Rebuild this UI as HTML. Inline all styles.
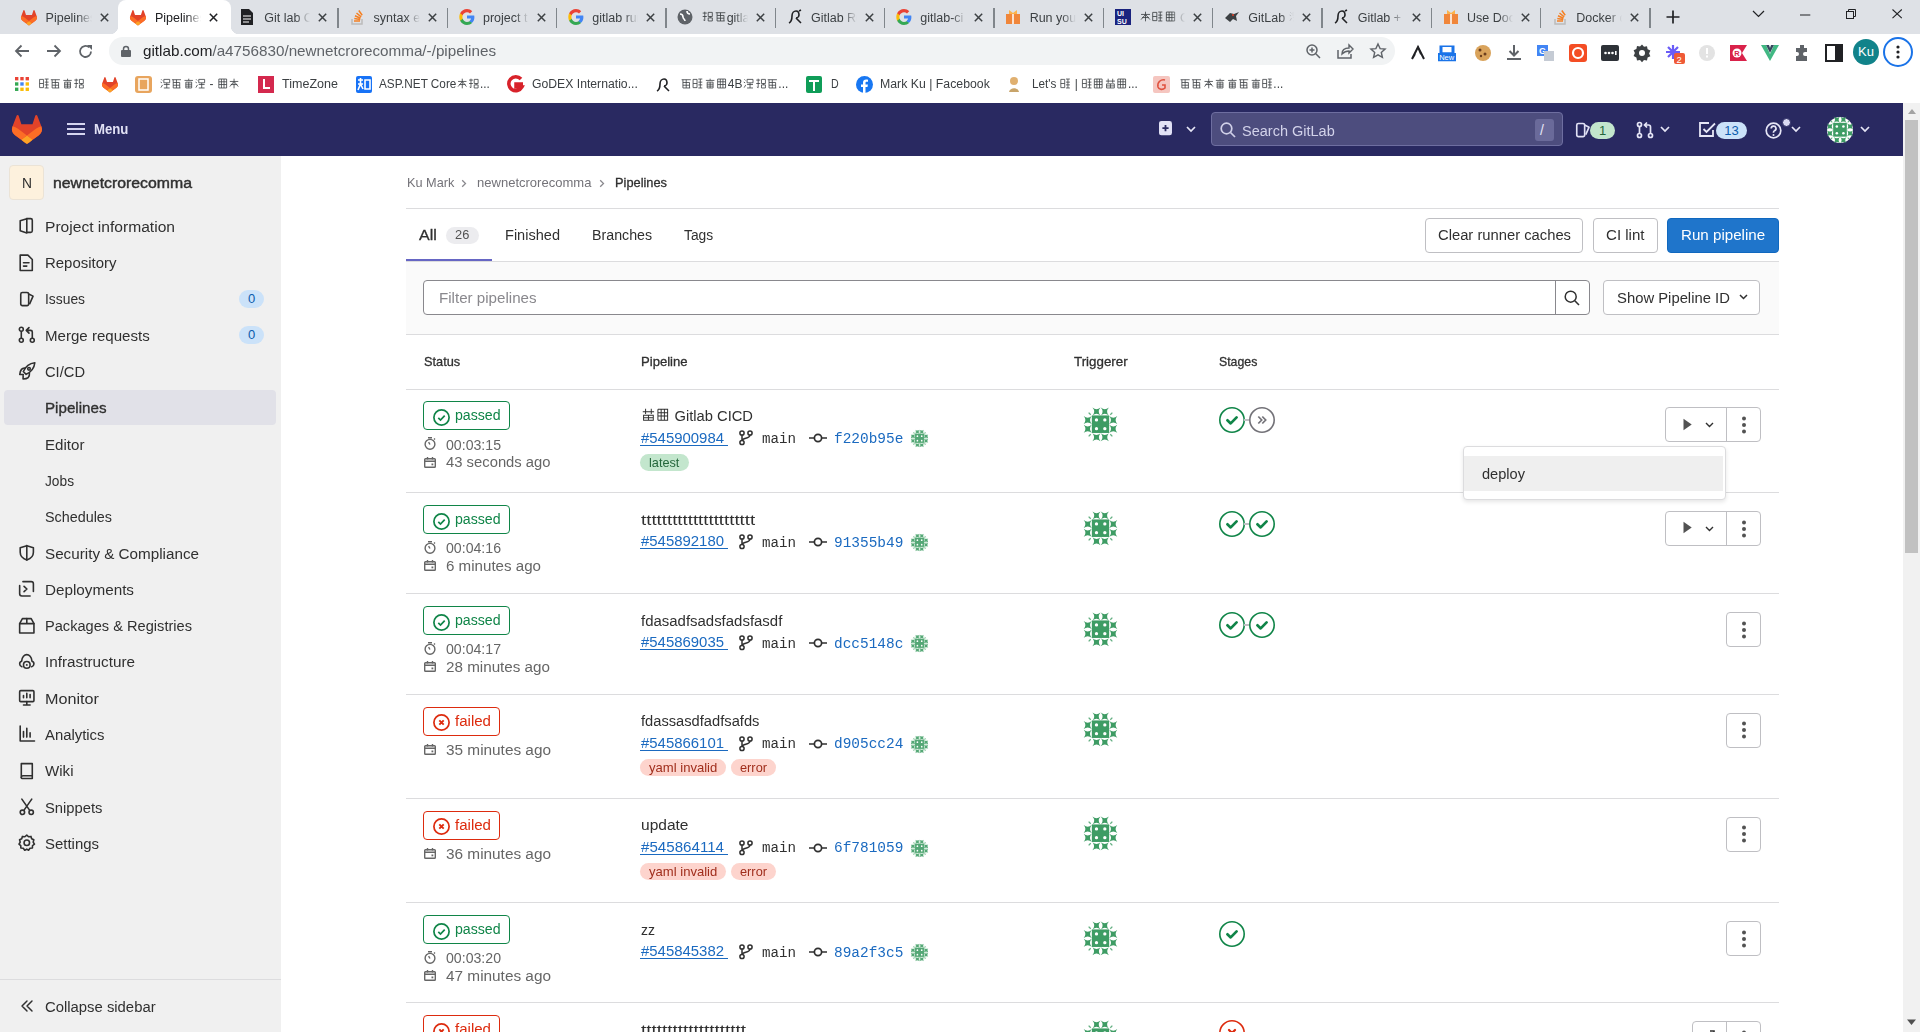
<!DOCTYPE html><html><head><meta charset="utf-8"><style>
*{box-sizing:border-box;margin:0;padding:0}
html,body{width:1920px;height:1032px;overflow:hidden;background:#fff;font-family:"Liberation Sans",sans-serif;color:#303030}
.a{position:absolute}
.t{position:absolute;white-space:nowrap}
svg{display:block;position:absolute;overflow:visible}
#tabs{position:absolute;left:0;top:0;width:1920px;height:34px;background:#dee1e6}
.tab{position:absolute;top:0;width:109.34px;height:34px;font-size:12.5px;color:#3c4043}
.tt{position:absolute;left:35.2px;top:9.7px;width:47px;height:18px;overflow:hidden;white-space:nowrap;line-height:16px;-webkit-mask-image:linear-gradient(90deg,#000 68%,transparent 98%)}
.sep{position:absolute;left:108.3px;top:7.7px;width:1.2px;height:20.3px;background:#80868b}
#toolbar{position:absolute;left:0;top:34px;width:1920px;height:34px;background:#fff}
#bm{position:absolute;left:0;top:68px;width:1920px;height:35px;background:#fff}
.bmi{position:absolute;top:8px;height:18px;font-size:12.5px;color:#3c4043;line-height:18px;white-space:nowrap}
#nav{position:absolute;left:0;top:103px;width:1903px;height:53px;background:#292961}
#side{position:absolute;left:0;top:156px;width:281px;height:876px;background:#f0f0f0}
.si{position:absolute;left:44px;font-size:15.4px;color:#303030;line-height:20px;white-space:nowrap}
.cnt{position:absolute;left:239px;width:25px;height:18px;border-radius:9px;background:#cbe2f9;color:#0b5cad;font-size:13px;text-align:center;line-height:18px}
#scroll{position:absolute;left:1903px;top:103px;width:17px;height:929px;background:#f1f1f1}
.hr{position:absolute;left:406px;width:1373px;height:1px;background:#dcdcde}
.btn{position:absolute;height:35px;border:1px solid #bfbfc3;border-radius:4px;background:#fff;font-size:15.4px;color:#303030;line-height:33px;text-align:center;white-space:nowrap}
.th{position:absolute;font-size:14.3px;font-weight:bold;color:#303030;line-height:20px;white-space:nowrap}
.badge{position:absolute;left:423px;height:29px;border:1px solid;border-radius:4px;font-size:15.4px;line-height:27px;white-space:nowrap}
.pass{border-color:#108548;color:#108548}
.fail{border-color:#dd2b0e;color:#dd2b0e}
.meta{position:absolute;left:445px;font-size:15.4px;color:#666;line-height:20px;white-space:nowrap}
.ptitle{position:absolute;left:640px;font-size:15.4px;color:#303030;line-height:20px;white-space:nowrap}
.plink{position:absolute;left:640px;font-size:15.4px;color:#1f75cb;line-height:20px;white-space:nowrap;text-decoration:underline}
.mono{position:absolute;font-family:"Liberation Mono",monospace;font-size:14.5px;line-height:20px;white-space:nowrap}
.tag{position:absolute;height:17px;border-radius:9px;font-size:13.2px;line-height:17px;text-align:center;white-space:nowrap}
.latest{background:#c3e6cd;color:#24663b}
.red{background:#fdd4cd;color:#ae1800}
.grp{position:absolute;height:35px;border:1px solid #bfbfc3;border-radius:4px;background:#fff}
</style></head><body>
<div id="tabs">
<div class="tab" style="left:10.4px">
<svg style="left:10.5px;top:9.5px;width:16px;height:15.36px" viewBox="0 0 25 24" ><path d="m24.507 9.5-.034-.09L21.082.562a.896.896 0 0 0-1.694.091l-2.29 7.01H7.825L5.535.653a.898.898 0 0 0-1.694-.09L.451 9.411.416 9.5a6.297 6.297 0 0 0 2.09 7.278l.012.01.03.022 5.16 3.867 2.56 1.935 1.554 1.176a1.051 1.051 0 0 0 1.268 0l1.555-1.176 2.56-1.935 5.197-3.89.014-.01A6.297 6.297 0 0 0 24.507 9.5Z" fill="#E24329"/><path d="m24.507 9.5-.034-.09a11.44 11.44 0 0 0-4.56 2.051l-7.447 5.632 4.742 3.584 5.197-3.89.014-.01A6.297 6.297 0 0 0 24.507 9.5Z" fill="#FC6D26"/><path d="m7.707 20.677 2.56 1.935 1.555 1.176a1.051 1.051 0 0 0 1.268 0l1.555-1.176 2.56-1.935-4.743-3.584-4.755 3.584Z" fill="#FCA326"/><path d="M5.01 11.461a11.43 11.43 0 0 0-4.56-2.05L.416 9.5a6.297 6.297 0 0 0 2.09 7.278l.012.01.03.022 5.16 3.867 4.745-3.584-7.444-5.632Z" fill="#FC6D26"/></svg>
<div class="tt" style="color:#3c4043">Pipelines</div>
<svg style="left:89.3px;top:12.5px;width:9px;height:9px" viewBox="0 0 9 9" ><path d="M.8 .8L8.2 8.2M8.2 .8L.8 8.2" stroke="#3c4043" stroke-width="1.5"/></svg>
</div>
<div class="a" style="left:118.24px;top:0;width:112.3px;height:34px;background:#fff;border-radius:8px 8px 0 0"></div>
<div class="a" style="left:110.24px;top:26px;width:8px;height:8px;background:radial-gradient(circle at 0 0,transparent 8px,#fff 8.5px)"></div>
<div class="a" style="left:230.54px;top:26px;width:8px;height:8px;background:radial-gradient(circle at 100% 0,transparent 8px,#fff 8.5px)"></div>
<div class="tab" style="left:119.74px">
<svg style="left:10.5px;top:9.5px;width:16px;height:15.36px" viewBox="0 0 25 24" ><path d="m24.507 9.5-.034-.09L21.082.562a.896.896 0 0 0-1.694.091l-2.29 7.01H7.825L5.535.653a.898.898 0 0 0-1.694-.09L.451 9.411.416 9.5a6.297 6.297 0 0 0 2.09 7.278l.012.01.03.022 5.16 3.867 2.56 1.935 1.554 1.176a1.051 1.051 0 0 0 1.268 0l1.555-1.176 2.56-1.935 5.197-3.89.014-.01A6.297 6.297 0 0 0 24.507 9.5Z" fill="#E24329"/><path d="m24.507 9.5-.034-.09a11.44 11.44 0 0 0-4.56 2.051l-7.447 5.632 4.742 3.584 5.197-3.89.014-.01A6.297 6.297 0 0 0 24.507 9.5Z" fill="#FC6D26"/><path d="m7.707 20.677 2.56 1.935 1.555 1.176a1.051 1.051 0 0 0 1.268 0l1.555-1.176 2.56-1.935-4.743-3.584-4.755 3.584Z" fill="#FCA326"/><path d="M5.01 11.461a11.43 11.43 0 0 0-4.56-2.05L.416 9.5a6.297 6.297 0 0 0 2.09 7.278l.012.01.03.022 5.16 3.867 4.745-3.584-7.444-5.632Z" fill="#FC6D26"/></svg>
<div class="tt" style="color:#202124">Pipelines</div>
<svg style="left:89.3px;top:12.5px;width:9px;height:9px" viewBox="0 0 9 9" ><path d="M.8 .8L8.2 8.2M8.2 .8L.8 8.2" stroke="#202124" stroke-width="1.5"/></svg>
</div>
<div class="tab" style="left:229.08px">
<svg style="left:11px;top:9px;width:14px;height:16px" viewBox="0 0 14 16" ><path d="M1 0h8l4 4v12H1z" fill="#202124"/><path d="M3 7h8M3 10h8M3 13h6" stroke="#fff" stroke-width="1.2"/></svg>
<div class="tt" style="color:#3c4043">Git lab CI</div>
<svg style="left:89.3px;top:12.5px;width:9px;height:9px" viewBox="0 0 9 9" ><path d="M.8 .8L8.2 8.2M8.2 .8L.8 8.2" stroke="#3c4043" stroke-width="1.5"/></svg>
<div class="sep"></div>
</div>
<div class="tab" style="left:338.42px">
<svg style="left:11px;top:9px;width:16px;height:16px" viewBox="0 0 16 16" ><path d="M3 10v5h10v-5" fill="none" stroke="#bcbbbb" stroke-width="1.5"/><path d="M5 12h6M5.3 9.5l6 1M6 6.8l5.5 2.5M7.5 4l4.7 3.8M9.8 1.5l3.4 4.8" stroke="#f48024" stroke-width="1.5"/></svg>
<div class="tt" style="color:#3c4043">syntax err</div>
<svg style="left:89.3px;top:12.5px;width:9px;height:9px" viewBox="0 0 9 9" ><path d="M.8 .8L8.2 8.2M8.2 .8L.8 8.2" stroke="#3c4043" stroke-width="1.5"/></svg>
<div class="sep"></div>
</div>
<div class="tab" style="left:447.76px">
<svg style="left:11px;top:9px;width:16px;height:16px" viewBox="0 0 16 16" ><path fill="#4285F4" d="M15.4 8.2c0-.6-.1-1.1-.2-1.6H8v3h4.1c-.2 1-.7 1.8-1.5 2.3v1.9h2.5c1.4-1.3 2.3-3.3 2.3-5.6z"/><path fill="#34A853" d="M8 16c2.1 0 3.8-.7 5.1-1.9l-2.5-1.9c-.7.5-1.6.8-2.6.8-2 0-3.7-1.4-4.3-3.2H1.1v2C2.4 14.3 5 16 8 16z"/><path fill="#FBBC05" d="M3.7 9.8c-.2-.5-.3-1.1-.3-1.8s.1-1.2.3-1.8v-2H1.1C.6 5.3.3 6.6.3 8s.3 2.7.8 3.8z"/><path fill="#EA4335" d="M8 3.2c1.1 0 2.2.4 3 1.2l2.2-2.2C11.8.8 10.1 0 8 0 5 0 2.4 1.7 1.1 4.2l2.6 2C4.3 4.6 6 3.2 8 3.2z"/></svg>
<div class="tt" style="color:#3c4043">project t</div>
<svg style="left:89.3px;top:12.5px;width:9px;height:9px" viewBox="0 0 9 9" ><path d="M.8 .8L8.2 8.2M8.2 .8L.8 8.2" stroke="#3c4043" stroke-width="1.5"/></svg>
<div class="sep"></div>
</div>
<div class="tab" style="left:557.1px">
<svg style="left:11px;top:9px;width:16px;height:16px" viewBox="0 0 16 16" ><path fill="#4285F4" d="M15.4 8.2c0-.6-.1-1.1-.2-1.6H8v3h4.1c-.2 1-.7 1.8-1.5 2.3v1.9h2.5c1.4-1.3 2.3-3.3 2.3-5.6z"/><path fill="#34A853" d="M8 16c2.1 0 3.8-.7 5.1-1.9l-2.5-1.9c-.7.5-1.6.8-2.6.8-2 0-3.7-1.4-4.3-3.2H1.1v2C2.4 14.3 5 16 8 16z"/><path fill="#FBBC05" d="M3.7 9.8c-.2-.5-.3-1.1-.3-1.8s.1-1.2.3-1.8v-2H1.1C.6 5.3.3 6.6.3 8s.3 2.7.8 3.8z"/><path fill="#EA4335" d="M8 3.2c1.1 0 2.2.4 3 1.2l2.2-2.2C11.8.8 10.1 0 8 0 5 0 2.4 1.7 1.1 4.2l2.6 2C4.3 4.6 6 3.2 8 3.2z"/></svg>
<div class="tt" style="color:#3c4043">gitlab run</div>
<svg style="left:89.3px;top:12.5px;width:9px;height:9px" viewBox="0 0 9 9" ><path d="M.8 .8L8.2 8.2M8.2 .8L.8 8.2" stroke="#3c4043" stroke-width="1.5"/></svg>
<div class="sep"></div>
</div>
<div class="tab" style="left:666.44px">
<svg style="left:11px;top:9px;width:16px;height:16px" viewBox="0 0 16 16" ><circle cx="8" cy="8" r="7.5" fill="#5f6368"/><path d="M3 5c2 0 3 1 3 3s2 2 2 4M10 2c0 2 1 3 3 3" stroke="#fff" stroke-width="1.6" fill="none"/></svg>
<div class="tt" style="color:#3c4043"><span style="display:inline-block;width:1em;height:1em;vertical-align:-0.13em;position:relative"><svg viewBox="0 0 16 16" style="position:absolute;left:0.06em;top:0.04em;width:.88em;height:.88em;overflow:visible"><path d="M1 3h6M4 1v13l-2-1M1 8h6M9 2h6v6H9zM9 10h6v4.5H9zM12 8v2" stroke="currentColor" stroke-width="1.2" fill="none" opacity="1.0"/></svg></span><span style="display:inline-block;width:1em;height:1em;vertical-align:-0.13em;position:relative"><svg viewBox="0 0 16 16" style="position:absolute;left:0.06em;top:0.04em;width:.88em;height:.88em;overflow:visible"><path d="M1 2.5h14M3 2.5v12M3 6.5h10M3 10.5h10M3 14.5h11M8 2.5v12M13 6.5v8" stroke="currentColor" stroke-width="1.2" fill="none" opacity="1.0"/></svg></span>gitlab</div>
<svg style="left:89.3px;top:12.5px;width:9px;height:9px" viewBox="0 0 9 9" ><path d="M.8 .8L8.2 8.2M8.2 .8L.8 8.2" stroke="#3c4043" stroke-width="1.5"/></svg>
<div class="sep"></div>
</div>
<div class="tab" style="left:775.78px">
<svg style="left:11px;top:9px;width:16px;height:16px" viewBox="0 0 16 16" ><path d="M2 14c2-1 3-4 3-7s2-5 4-5 3 2 3 4-2 3-3 3M9 9l5 5M12 2l2-1" stroke="#202124" stroke-width="1.6" fill="none"/></svg>
<div class="tt" style="color:#3c4043">Gitlab Ru</div>
<svg style="left:89.3px;top:12.5px;width:9px;height:9px" viewBox="0 0 9 9" ><path d="M.8 .8L8.2 8.2M8.2 .8L.8 8.2" stroke="#3c4043" stroke-width="1.5"/></svg>
<div class="sep"></div>
</div>
<div class="tab" style="left:885.12px">
<svg style="left:11px;top:9px;width:16px;height:16px" viewBox="0 0 16 16" ><path fill="#4285F4" d="M15.4 8.2c0-.6-.1-1.1-.2-1.6H8v3h4.1c-.2 1-.7 1.8-1.5 2.3v1.9h2.5c1.4-1.3 2.3-3.3 2.3-5.6z"/><path fill="#34A853" d="M8 16c2.1 0 3.8-.7 5.1-1.9l-2.5-1.9c-.7.5-1.6.8-2.6.8-2 0-3.7-1.4-4.3-3.2H1.1v2C2.4 14.3 5 16 8 16z"/><path fill="#FBBC05" d="M3.7 9.8c-.2-.5-.3-1.1-.3-1.8s.1-1.2.3-1.8v-2H1.1C.6 5.3.3 6.6.3 8s.3 2.7.8 3.8z"/><path fill="#EA4335" d="M8 3.2c1.1 0 2.2.4 3 1.2l2.2-2.2C11.8.8 10.1 0 8 0 5 0 2.4 1.7 1.1 4.2l2.6 2C4.3 4.6 6 3.2 8 3.2z"/></svg>
<div class="tt" style="color:#3c4043">gitlab-ci</div>
<svg style="left:89.3px;top:12.5px;width:9px;height:9px" viewBox="0 0 9 9" ><path d="M.8 .8L8.2 8.2M8.2 .8L.8 8.2" stroke="#3c4043" stroke-width="1.5"/></svg>
<div class="sep"></div>
</div>
<div class="tab" style="left:994.46px">
<svg style="left:11px;top:9px;width:16px;height:16px" viewBox="0 0 16 16" ><path d="M1 5h14v10H1z" fill="#f0863a"/><path d="M4 1l4 3 4-3v4H4z" fill="#fcb34b"/><path d="M8 5v10" stroke="#fff" stroke-width="1.5"/></svg>
<div class="tt" style="color:#3c4043">Run your</div>
<svg style="left:89.3px;top:12.5px;width:9px;height:9px" viewBox="0 0 9 9" ><path d="M.8 .8L8.2 8.2M8.2 .8L.8 8.2" stroke="#3c4043" stroke-width="1.5"/></svg>
<div class="sep"></div>
</div>
<div class="tab" style="left:1103.8px">
<svg style="left:11px;top:9px;width:16px;height:16px" viewBox="0 0 16 16" ><rect width="16" height="16" fill="#1a237e"/><text x="2" y="7" font-size="7" fill="#fff" font-family="Liberation Sans" font-weight="bold">UI</text><text x="2" y="14.5" font-size="7" fill="#fff" font-family="Liberation Sans" font-weight="bold">SU</text></svg>
<div class="tt" style="color:#3c4043"><span style="display:inline-block;width:1em;height:1em;vertical-align:-0.13em;position:relative"><svg viewBox="0 0 16 16" style="position:absolute;left:0.06em;top:0.04em;width:.88em;height:.88em;overflow:visible"><path d="M1.5 5h13M8 1v14M7.5 5.5l-6 7M8.5 5.5l6 7M3 9.5h10" stroke="currentColor" stroke-width="1.2" fill="none" opacity="1.0"/></svg></span><span style="display:inline-block;width:1em;height:1em;vertical-align:-0.13em;position:relative"><svg viewBox="0 0 16 16" style="position:absolute;left:0.06em;top:0.04em;width:.88em;height:.88em;overflow:visible"><path d="M1 2v12M1 2h6v12H1M1 8h6M9 1.5h6M12 1.5v13M9 6h6M9 10h6M9 14.5h6" stroke="currentColor" stroke-width="1.2" fill="none" opacity="1.0"/></svg></span><span style="display:inline-block;width:1em;height:1em;vertical-align:-0.13em;position:relative"><svg viewBox="0 0 16 16" style="position:absolute;left:0.06em;top:0.04em;width:.88em;height:.88em;overflow:visible"><path d="M2 1.5v13M2 1.5h12v13H2M2 5.5h12M2 9.5h12M6 1.5v13M10 1.5v13" stroke="currentColor" stroke-width="1.2" fill="none" opacity="1.0"/></svg></span> G</div>
<svg style="left:89.3px;top:12.5px;width:9px;height:9px" viewBox="0 0 9 9" ><path d="M.8 .8L8.2 8.2M8.2 .8L.8 8.2" stroke="#3c4043" stroke-width="1.5"/></svg>
<div class="sep"></div>
</div>
<div class="tab" style="left:1213.14px">
<svg style="left:11px;top:9px;width:16px;height:16px" viewBox="0 0 16 16" ><path d="M1 9l5-5 4 1 5-2-3 4 1 5-4-2-3 3z" fill="#3c4043"/><circle cx="9" cy="6" r="1" fill="#e24329"/></svg>
<div class="tt" style="color:#3c4043">GitLab <span style="display:inline-block;width:1em;height:1em;vertical-align:-0.13em;position:relative"><svg viewBox="0 0 16 16" style="position:absolute;left:0.06em;top:0.04em;width:.88em;height:.88em;overflow:visible"><path d="M2 2l1.5 1.5M1 6l2 1M1.5 14l2.5-4M6 2h9v5H6zM6 9.5h9M10.5 7v7.5M6 14.5h9" stroke="currentColor" stroke-width="1.2" fill="none" opacity="1.0"/></svg></span></div>
<svg style="left:89.3px;top:12.5px;width:9px;height:9px" viewBox="0 0 9 9" ><path d="M.8 .8L8.2 8.2M8.2 .8L.8 8.2" stroke="#3c4043" stroke-width="1.5"/></svg>
<div class="sep"></div>
</div>
<div class="tab" style="left:1322.48px">
<svg style="left:11px;top:9px;width:16px;height:16px" viewBox="0 0 16 16" ><path d="M2 14c2-1 3-4 3-7s2-5 4-5 3 2 3 4-2 3-3 3M9 9l5 5M12 2l2-1" stroke="#202124" stroke-width="1.6" fill="none"/></svg>
<div class="tt" style="color:#3c4043">Gitlab + D</div>
<svg style="left:89.3px;top:12.5px;width:9px;height:9px" viewBox="0 0 9 9" ><path d="M.8 .8L8.2 8.2M8.2 .8L.8 8.2" stroke="#3c4043" stroke-width="1.5"/></svg>
<div class="sep"></div>
</div>
<div class="tab" style="left:1431.82px">
<svg style="left:11px;top:9px;width:16px;height:16px" viewBox="0 0 16 16" ><path d="M1 5h14v10H1z" fill="#f0863a"/><path d="M4 1l4 3 4-3v4H4z" fill="#fcb34b"/><path d="M8 5v10" stroke="#fff" stroke-width="1.5"/></svg>
<div class="tt" style="color:#3c4043">Use Doc</div>
<svg style="left:89.3px;top:12.5px;width:9px;height:9px" viewBox="0 0 9 9" ><path d="M.8 .8L8.2 8.2M8.2 .8L.8 8.2" stroke="#3c4043" stroke-width="1.5"/></svg>
<div class="sep"></div>
</div>
<div class="tab" style="left:1541.16px">
<svg style="left:11px;top:9px;width:16px;height:16px" viewBox="0 0 16 16" ><path d="M3 10v5h10v-5" fill="none" stroke="#bcbbbb" stroke-width="1.5"/><path d="M5 12h6M5.3 9.5l6 1M6 6.8l5.5 2.5M7.5 4l4.7 3.8M9.8 1.5l3.4 4.8" stroke="#f48024" stroke-width="1.5"/></svg>
<div class="tt" style="color:#3c4043">Docker c</div>
<svg style="left:89.3px;top:12.5px;width:9px;height:9px" viewBox="0 0 9 9" ><path d="M.8 .8L8.2 8.2M8.2 .8L.8 8.2" stroke="#3c4043" stroke-width="1.5"/></svg>
<div class="sep"></div>
</div>
<svg style="left:1665.5px;top:10px;width:14px;height:14px" viewBox="0 0 14 14" ><path d="M7 .5v13M.5 7h13" stroke="#202124" stroke-width="1.7"/></svg>
<svg style="left:1752px;top:10px;width:13px;height:8px" viewBox="0 0 13 8" ><path d="M1 1l5.5 5.5L12 1" stroke="#202124" stroke-width="1.2" fill="none"/></svg>
<svg style="left:1799.7px;top:13.5px;width:10.3px;height:2px" viewBox="0 0 10.3 2" ><path d="M0 1h10.3" stroke="#202124" stroke-width="1"/></svg>
<svg style="left:1846px;top:9px;width:10px;height:10px" viewBox="0 0 10 10" ><path d="M2.5 2.5V.5h7v7h-2" stroke="#202124" stroke-width="1" fill="none"/><rect x=".5" y="2.5" width="7" height="7" stroke="#202124" stroke-width="1" fill="none"/></svg>
<svg style="left:1892px;top:9.2px;width:10.3px;height:9.7px" viewBox="0 0 10.3 9.7" ><path d="M.5 .5l9.3 8.7M9.8 .5L.5 9.2" stroke="#202124" stroke-width="1.05"/></svg>
</div>
<div id="toolbar">
<svg style="left:14px;top:10px;width:16px;height:14px" viewBox="0 0 16 14" ><path d="M15 7H2M7.5 1.5L2 7l5.5 5.5" stroke="#5f6368" stroke-width="1.8" fill="none"/></svg>
<svg style="left:46px;top:10px;width:16px;height:14px" viewBox="0 0 16 14" ><path d="M1 7h13M8.5 1.5L14 7l-5.5 5.5" stroke="#5f6368" stroke-width="1.8" fill="none"/></svg>
<svg style="left:78px;top:10px;width:15px;height:15px" viewBox="0 0 15 15" ><path d="M13 7.5A5.5 5.5 0 1 1 11.2 3.4" stroke="#5f6368" stroke-width="1.8" fill="none"/><path d="M9 1h5v5z" fill="#5f6368"/></svg>
<div class="a" style="left:109px;top:3px;width:1286px;height:28px;border-radius:14px;background:#f1f3f4"></div>
<svg style="left:121px;top:11px;width:10px;height:12px" viewBox="0 0 10 12" ><rect x="0" y="5" width="10" height="7" rx="1" fill="#5f6368"/><path d="M2.5 5.5V4a2.5 2.5 0 0 1 5 0v1.5" stroke="#5f6368" stroke-width="1.5" fill="none"/></svg>
<div class="t" style="left:142.7px;top:8.20px;font-size:15px;line-height:18px;color:#202124;font-weight:400;font-family:'Liberation Sans',sans-serif;transform:scaleX(1.0152);transform-origin:0 0;">gitlab.com<span style="color:#5f6368">/a4756830/newnetcrorecomma/-/pipelines</span></div>
<svg style="left:1306px;top:10px;width:15px;height:15px" viewBox="0 0 15 15" ><circle cx="6" cy="6" r="5" stroke="#5f6368" stroke-width="1.5" fill="none"/><path d="M9.8 9.8L14 14M3.5 6h5M6 3.5v5" stroke="#5f6368" stroke-width="1.5"/></svg>
<svg style="left:1337px;top:10px;width:17px;height:15px" viewBox="0 0 17 15" ><path d="M1 6v8h13v-4" stroke="#5f6368" stroke-width="1.5" fill="none"/><path d="M5 10c0-4 3-6 7-6V1l4 4-4 4V7c-3 0-5 1-7 3z" stroke="#5f6368" stroke-width="1.4" fill="none"/></svg>
<svg style="left:1370px;top:9px;width:16px;height:16px" viewBox="0 0 16 16" ><path d="M8 1l2.1 4.6 5 .5-3.8 3.4 1.1 4.9L8 11.8l-4.4 2.6 1.1-4.9L.9 6.1l5-.5z" stroke="#5f6368" stroke-width="1.4" fill="none"/></svg>
<svg style="left:1409px;top:9.5px;width:18px;height:18px" viewBox="0 0 18 18" ><path d="M3 15L9 3l6 12M6 10l-3 5M9 3l3 7" stroke="#202124" stroke-width="2" fill="none"/></svg>
<svg style="left:1438px;top:9.5px;width:18px;height:18px" viewBox="0 0 24 22" ><rect x="2" y="1" width="20" height="12" fill="#1a73e8"/><rect x="6" y="3" width="12" height="7" fill="#fff"/><rect x="0" y="11" width="24" height="11" fill="#1a73e8"/><text x="1.5" y="20.5" font-size="10" fill="#fff" font-family="Liberation Sans">New</text></svg>
<svg style="left:1474px;top:9.5px;width:18px;height:18px" viewBox="0 0 18 18" ><circle cx="9" cy="9" r="8" fill="#d9a35b"/><circle cx="6" cy="6" r="1.5" fill="#6b3e1e"/><circle cx="11" cy="10" r="1.5" fill="#6b3e1e"/><circle cx="7" cy="12" r="1.2" fill="#6b3e1e"/></svg>
<svg style="left:1505px;top:9.5px;width:18px;height:18px" viewBox="0 0 18 18" ><path d="M9 1v10M4.5 7L9 11.5 13.5 7M2 15h14" stroke="#5f6368" stroke-width="2" fill="none"/></svg>
<svg style="left:1536px;top:9.5px;width:18px;height:18px" viewBox="0 0 18 18" ><rect x="1" y="1" width="11" height="11" fill="#4285f4"/><text x="3" y="10" font-size="9" fill="#fff" font-family="Liberation Sans" font-weight="bold">G</text><rect x="8" y="7" width="10" height="10" fill="#c5cbd4"/></svg>
<svg style="left:1569px;top:9.5px;width:18px;height:18px" viewBox="0 0 18 18" ><rect x="0" y="0" width="18" height="18" rx="3" fill="#f44d24"/><circle cx="9" cy="9" r="5" stroke="#fff" stroke-width="2.2" fill="none"/></svg>
<svg style="left:1601px;top:9.5px;width:18px;height:18px" viewBox="0 0 18 18" ><rect x="0" y="1" width="18" height="16" rx="2" fill="#2d3137"/><circle cx="4.5" cy="9" r="1.3" fill="#fff"/><circle cx="8" cy="9" r="1.3" fill="#fff"/><circle cx="11.5" cy="9" r="1.3" fill="#fff"/><rect x="14" y="7" width="1.6" height="4" fill="#fff"/></svg>
<svg style="left:1633px;top:9.5px;width:18px;height:18px" viewBox="0 0 18 18" ><path d="M9 0.5l2 2.3 3-.5.6 3 2.8 1.3-1.3 2.8 1.3 2.8-2.8 1.3-.6 3-3-.5-2 2.3-2-2.3-3 .5-.6-3L.6 11.9 1.9 9 .6 6.2l2.8-1.3.6-3 3 .5z" fill="#3c4043"/><circle cx="9" cy="9" r="3" fill="#fff"/></svg>
<svg style="left:1665px;top:9.5px;width:18px;height:18px" viewBox="0 0 18 18" ><path d="M8 1v14M1 8h14M3 3l10 10M13 3L3 13" stroke="#6a5cf7" stroke-width="2.2"/><rect x="9" y="9" width="11" height="11" rx="2" fill="#ef5a36"/><text x="11.5" y="18.5" font-size="9.5" fill="#fff" font-family="Liberation Sans">2</text></svg>
<svg style="left:1698px;top:9.5px;width:18px;height:18px" viewBox="0 0 18 18" ><circle cx="9" cy="9" r="8" fill="#e3e3e3"/><rect x="8" y="4" width="2" height="6" fill="#fff"/><rect x="8" y="11.5" width="2" height="2" fill="#fff"/></svg>
<svg style="left:1729px;top:9.5px;width:18px;height:18px" viewBox="0 0 18 18" ><path d="M1 1h17l-5 8 5 8H1z" fill="#d9224a"/><circle cx="8" cy="9" r="4.5" fill="#fff"/><text x="5.3" y="12" font-size="7.5" fill="#d9224a" font-weight="bold" font-family="Liberation Sans">R</text></svg>
<svg style="left:1761px;top:9.5px;width:18px;height:18px" viewBox="0 0 18 18" ><path d="M0 1h5l4 9 4-9h5L9 17z" fill="#41b883"/><path d="M5 1h3l1 3 1-3h3l-4 8z" fill="#35495e"/></svg>
<svg style="left:1793px;top:9.5px;width:18px;height:18px" viewBox="0 0 18 18" ><path d="M7 1h4v3h3v4h-2a2 2 0 0 0 0 4h2v5H3v-5h1a2 2 0 0 0 0-4H3V4h4z" fill="#5f6368"/></svg>
<svg style="left:1825px;top:9.5px;width:18px;height:18px" viewBox="0 0 18 18" ><rect x="1" y="1" width="16" height="16" stroke="#202124" stroke-width="2" fill="none"/><rect x="10" y="1" width="7" height="16" fill="#202124"/></svg>
<div class="a" style="left:1853px;top:5.3px;width:26px;height:26px;border-radius:13px;background:#11838a;color:#fff;font-size:13px;line-height:26px;text-align:center">Ku</div>
<div class="a" style="left:1883px;top:3.3px;width:30px;height:30px;border-radius:15px;border:2px solid #1a73e8"></div>
<svg style="left:1896px;top:11.3px;width:4px;height:14px" viewBox="0 0 4 14" ><circle cx="2" cy="2" r="1.6" fill="#202124"/><circle cx="2" cy="7" r="1.6" fill="#202124"/><circle cx="2" cy="12" r="1.6" fill="#202124"/></svg>
</div>
<div id="bm">
<svg style="left:15px;top:9px;width:13px;height:13px" viewBox="0 0 13.5 13.5" ><rect x="0.0" y="0.0" width="3.5" height="3.5" fill="#ea4335"/><rect x="5.5" y="0.0" width="3.5" height="3.5" fill="#ea4335"/><rect x="11.0" y="0.0" width="3.5" height="3.5" fill="#ea4335"/><rect x="0.0" y="5.5" width="3.5" height="3.5" fill="#34a853"/><rect x="5.5" y="5.5" width="3.5" height="3.5" fill="#4285f4"/><rect x="11.0" y="5.5" width="3.5" height="3.5" fill="#fbbc05"/><rect x="0.0" y="11.0" width="3.5" height="3.5" fill="#34a853"/><rect x="5.5" y="11.0" width="3.5" height="3.5" fill="#fbbc05"/><rect x="11.0" y="11.0" width="3.5" height="3.5" fill="#fbbc05"/></svg>
<div class="t" style="left:38.4px;top:7.47px;font-size:12.5px;line-height:18px;color:#3c4043;font-weight:400;font-family:'Liberation Sans',sans-serif;transform:scaleX(0.9380);transform-origin:0 0;"><span style="display:inline-block;width:1em;height:1em;vertical-align:-0.13em;position:relative"><svg viewBox="0 0 16 16" style="position:absolute;left:0.06em;top:0.04em;width:.88em;height:.88em;overflow:visible"><path d="M1 2v12M1 2h6v12H1M1 8h6M9 1.5h6M12 1.5v13M9 6h6M9 10h6M9 14.5h6" stroke="currentColor" stroke-width="1.2" fill="none" opacity="1.0"/></svg></span><span style="display:inline-block;width:1em;height:1em;vertical-align:-0.13em;position:relative"><svg viewBox="0 0 16 16" style="position:absolute;left:0.06em;top:0.04em;width:.88em;height:.88em;overflow:visible"><path d="M1 2.5h14M3 2.5v12M3 6.5h10M3 10.5h10M3 14.5h11M8 2.5v12M13 6.5v8" stroke="currentColor" stroke-width="1.2" fill="none" opacity="1.0"/></svg></span><span style="display:inline-block;width:1em;height:1em;vertical-align:-0.13em;position:relative"><svg viewBox="0 0 16 16" style="position:absolute;left:0.06em;top:0.04em;width:.88em;height:.88em;overflow:visible"><path d="M8 1v2.5M1.5 3.5h13M3.5 6h9v8.5h-9zM3.5 9h9M3.5 11.8h9M8 6v8.5" stroke="currentColor" stroke-width="1.2" fill="none" opacity="1.0"/></svg></span><span style="display:inline-block;width:1em;height:1em;vertical-align:-0.13em;position:relative"><svg viewBox="0 0 16 16" style="position:absolute;left:0.06em;top:0.04em;width:.88em;height:.88em;overflow:visible"><path d="M1 3h6M4 1v13l-2-1M1 8h6M9 2h6v6H9zM9 10h6v4.5H9zM12 8v2" stroke="currentColor" stroke-width="1.2" fill="none" opacity="1.0"/></svg></span></div>
<div class="t" style="left:158.9px;top:7.47px;font-size:12.5px;line-height:18px;color:#3c4043;font-weight:400;font-family:'Liberation Sans',sans-serif;transform:scaleX(0.9441);transform-origin:0 0;"><span style="display:inline-block;width:1em;height:1em;vertical-align:-0.13em;position:relative"><svg viewBox="0 0 16 16" style="position:absolute;left:0.06em;top:0.04em;width:.88em;height:.88em;overflow:visible"><path d="M2 2l1.5 1.5M1 6l2 1M1.5 14l2.5-4M6 2h9v5H6zM6 9.5h9M10.5 7v7.5M6 14.5h9" stroke="currentColor" stroke-width="1.2" fill="none" opacity="1.0"/></svg></span><span style="display:inline-block;width:1em;height:1em;vertical-align:-0.13em;position:relative"><svg viewBox="0 0 16 16" style="position:absolute;left:0.06em;top:0.04em;width:.88em;height:.88em;overflow:visible"><path d="M1 2.5h14M3 2.5v12M3 6.5h10M3 10.5h10M3 14.5h11M8 2.5v12M13 6.5v8" stroke="currentColor" stroke-width="1.2" fill="none" opacity="1.0"/></svg></span><span style="display:inline-block;width:1em;height:1em;vertical-align:-0.13em;position:relative"><svg viewBox="0 0 16 16" style="position:absolute;left:0.06em;top:0.04em;width:.88em;height:.88em;overflow:visible"><path d="M8 1v2.5M1.5 3.5h13M3.5 6h9v8.5h-9zM3.5 9h9M3.5 11.8h9M8 6v8.5" stroke="currentColor" stroke-width="1.2" fill="none" opacity="1.0"/></svg></span><span style="display:inline-block;width:1em;height:1em;vertical-align:-0.13em;position:relative"><svg viewBox="0 0 16 16" style="position:absolute;left:0.06em;top:0.04em;width:.88em;height:.88em;overflow:visible"><path d="M2 2l1.5 1.5M1 6l2 1M1.5 14l2.5-4M6 2h9v5H6zM6 9.5h9M10.5 7v7.5M6 14.5h9" stroke="currentColor" stroke-width="1.2" fill="none" opacity="1.0"/></svg></span> - <span style="display:inline-block;width:1em;height:1em;vertical-align:-0.13em;position:relative"><svg viewBox="0 0 16 16" style="position:absolute;left:0.06em;top:0.04em;width:.88em;height:.88em;overflow:visible"><path d="M2 1.5v13M2 1.5h12v13H2M2 5.5h12M2 9.5h12M6 1.5v13M10 1.5v13" stroke="currentColor" stroke-width="1.2" fill="none" opacity="1.0"/></svg></span><span style="display:inline-block;width:1em;height:1em;vertical-align:-0.13em;position:relative"><svg viewBox="0 0 16 16" style="position:absolute;left:0.06em;top:0.04em;width:.88em;height:.88em;overflow:visible"><path d="M1.5 5h13M8 1v14M7.5 5.5l-6 7M8.5 5.5l6 7M3 9.5h10" stroke="currentColor" stroke-width="1.2" fill="none" opacity="1.0"/></svg></span></div>
<div class="t" style="left:282.3px;top:7.47px;font-size:12.5px;line-height:18px;color:#3c4043;font-weight:400;font-family:'Liberation Sans',sans-serif;transform:scaleX(1.0034);transform-origin:0 0;">TimeZone</div>
<div class="t" style="left:378.9px;top:7.47px;font-size:12.5px;line-height:18px;color:#3c4043;font-weight:400;font-family:'Liberation Sans',sans-serif;transform:scaleX(0.9410);transform-origin:0 0;">ASP.NET Core<span style="display:inline-block;width:1em;height:1em;vertical-align:-0.13em;position:relative"><svg viewBox="0 0 16 16" style="position:absolute;left:0.06em;top:0.04em;width:.88em;height:.88em;overflow:visible"><path d="M1.5 5h13M8 1v14M7.5 5.5l-6 7M8.5 5.5l6 7M3 9.5h10" stroke="currentColor" stroke-width="1.2" fill="none" opacity="1.0"/></svg></span><span style="display:inline-block;width:1em;height:1em;vertical-align:-0.13em;position:relative"><svg viewBox="0 0 16 16" style="position:absolute;left:0.06em;top:0.04em;width:.88em;height:.88em;overflow:visible"><path d="M1 3h6M4 1v13l-2-1M1 8h6M9 2h6v6H9zM9 10h6v4.5H9zM12 8v2" stroke="currentColor" stroke-width="1.2" fill="none" opacity="1.0"/></svg></span>...</div>
<div class="t" style="left:531.7px;top:7.47px;font-size:12.5px;line-height:18px;color:#3c4043;font-weight:400;font-family:'Liberation Sans',sans-serif;transform:scaleX(0.9761);transform-origin:0 0;">GoDEX Internatio...</div>
<div class="t" style="left:680.2px;top:7.47px;font-size:12.5px;line-height:18px;color:#3c4043;font-weight:400;font-family:'Liberation Sans',sans-serif;transform:scaleX(0.9566);transform-origin:0 0;"><span style="display:inline-block;width:1em;height:1em;vertical-align:-0.13em;position:relative"><svg viewBox="0 0 16 16" style="position:absolute;left:0.06em;top:0.04em;width:.88em;height:.88em;overflow:visible"><path d="M1 2.5h14M3 2.5v12M3 6.5h10M3 10.5h10M3 14.5h11M8 2.5v12M13 6.5v8" stroke="currentColor" stroke-width="1.2" fill="none" opacity="1.0"/></svg></span><span style="display:inline-block;width:1em;height:1em;vertical-align:-0.13em;position:relative"><svg viewBox="0 0 16 16" style="position:absolute;left:0.06em;top:0.04em;width:.88em;height:.88em;overflow:visible"><path d="M1 2v12M1 2h6v12H1M1 8h6M9 1.5h6M12 1.5v13M9 6h6M9 10h6M9 14.5h6" stroke="currentColor" stroke-width="1.2" fill="none" opacity="1.0"/></svg></span><span style="display:inline-block;width:1em;height:1em;vertical-align:-0.13em;position:relative"><svg viewBox="0 0 16 16" style="position:absolute;left:0.06em;top:0.04em;width:.88em;height:.88em;overflow:visible"><path d="M8 1v2.5M1.5 3.5h13M3.5 6h9v8.5h-9zM3.5 9h9M3.5 11.8h9M8 6v8.5" stroke="currentColor" stroke-width="1.2" fill="none" opacity="1.0"/></svg></span><span style="display:inline-block;width:1em;height:1em;vertical-align:-0.13em;position:relative"><svg viewBox="0 0 16 16" style="position:absolute;left:0.06em;top:0.04em;width:.88em;height:.88em;overflow:visible"><path d="M2 1.5v13M2 1.5h12v13H2M2 5.5h12M2 9.5h12M6 1.5v13M10 1.5v13" stroke="currentColor" stroke-width="1.2" fill="none" opacity="1.0"/></svg></span>4B<span style="display:inline-block;width:1em;height:1em;vertical-align:-0.13em;position:relative"><svg viewBox="0 0 16 16" style="position:absolute;left:0.06em;top:0.04em;width:.88em;height:.88em;overflow:visible"><path d="M2 2l1.5 1.5M1 6l2 1M1.5 14l2.5-4M6 2h9v5H6zM6 9.5h9M10.5 7v7.5M6 14.5h9" stroke="currentColor" stroke-width="1.2" fill="none" opacity="1.0"/></svg></span><span style="display:inline-block;width:1em;height:1em;vertical-align:-0.13em;position:relative"><svg viewBox="0 0 16 16" style="position:absolute;left:0.06em;top:0.04em;width:.88em;height:.88em;overflow:visible"><path d="M1 3h6M4 1v13l-2-1M1 8h6M9 2h6v6H9zM9 10h6v4.5H9zM12 8v2" stroke="currentColor" stroke-width="1.2" fill="none" opacity="1.0"/></svg></span><span style="display:inline-block;width:1em;height:1em;vertical-align:-0.13em;position:relative"><svg viewBox="0 0 16 16" style="position:absolute;left:0.06em;top:0.04em;width:.88em;height:.88em;overflow:visible"><path d="M1 2.5h14M3 2.5v12M3 6.5h10M3 10.5h10M3 14.5h11M8 2.5v12M13 6.5v8" stroke="currentColor" stroke-width="1.2" fill="none" opacity="1.0"/></svg></span>...</div>
<div class="t" style="left:830.8px;top:7.47px;font-size:12.5px;line-height:18px;color:#3c4043;font-weight:400;font-family:'Liberation Sans',sans-serif;transform:scaleX(0.8526);transform-origin:0 0;">D</div>
<div class="t" style="left:880.2px;top:7.47px;font-size:12.5px;line-height:18px;color:#3c4043;font-weight:400;font-family:'Liberation Sans',sans-serif;transform:scaleX(0.9835);transform-origin:0 0;">Mark Ku | Facebook</div>
<div class="t" style="left:1031.7px;top:7.47px;font-size:12.5px;line-height:18px;color:#3c4043;font-weight:400;font-family:'Liberation Sans',sans-serif;transform:scaleX(0.9394);transform-origin:0 0;">Let's <span style="display:inline-block;width:1em;height:1em;vertical-align:-0.13em;position:relative"><svg viewBox="0 0 16 16" style="position:absolute;left:0.06em;top:0.04em;width:.88em;height:.88em;overflow:visible"><path d="M1 2v12M1 2h6v12H1M1 8h6M9 1.5h6M12 1.5v13M9 6h6M9 10h6M9 14.5h6" stroke="currentColor" stroke-width="1.2" fill="none" opacity="1.0"/></svg></span> | <span style="display:inline-block;width:1em;height:1em;vertical-align:-0.13em;position:relative"><svg viewBox="0 0 16 16" style="position:absolute;left:0.06em;top:0.04em;width:.88em;height:.88em;overflow:visible"><path d="M1 2v12M1 2h6v12H1M1 8h6M9 1.5h6M12 1.5v13M9 6h6M9 10h6M9 14.5h6" stroke="currentColor" stroke-width="1.2" fill="none" opacity="1.0"/></svg></span><span style="display:inline-block;width:1em;height:1em;vertical-align:-0.13em;position:relative"><svg viewBox="0 0 16 16" style="position:absolute;left:0.06em;top:0.04em;width:.88em;height:.88em;overflow:visible"><path d="M2 1.5v13M2 1.5h12v13H2M2 5.5h12M2 9.5h12M6 1.5v13M10 1.5v13" stroke="currentColor" stroke-width="1.2" fill="none" opacity="1.0"/></svg></span><span style="display:inline-block;width:1em;height:1em;vertical-align:-0.13em;position:relative"><svg viewBox="0 0 16 16" style="position:absolute;left:0.06em;top:0.04em;width:.88em;height:.88em;overflow:visible"><path d="M1 4.5h14M4.5 1v6M11.5 1v6M2 8.5h12v6H2zM8 8.5v6M2 11.5h12" stroke="currentColor" stroke-width="1.2" fill="none" opacity="1.0"/></svg></span><span style="display:inline-block;width:1em;height:1em;vertical-align:-0.13em;position:relative"><svg viewBox="0 0 16 16" style="position:absolute;left:0.06em;top:0.04em;width:.88em;height:.88em;overflow:visible"><path d="M2 1.5v13M2 1.5h12v13H2M2 5.5h12M2 9.5h12M6 1.5v13M10 1.5v13" stroke="currentColor" stroke-width="1.2" fill="none" opacity="1.0"/></svg></span>...</div>
<div class="t" style="left:1178.75px;top:7.47px;font-size:12.5px;line-height:18px;color:#3c4043;font-weight:400;font-family:'Liberation Sans',sans-serif;transform:scaleX(0.9437);transform-origin:0 0;"><span style="display:inline-block;width:1em;height:1em;vertical-align:-0.13em;position:relative"><svg viewBox="0 0 16 16" style="position:absolute;left:0.06em;top:0.04em;width:.88em;height:.88em;overflow:visible"><path d="M1 2.5h14M3 2.5v12M3 6.5h10M3 10.5h10M3 14.5h11M8 2.5v12M13 6.5v8" stroke="currentColor" stroke-width="1.2" fill="none" opacity="1.0"/></svg></span><span style="display:inline-block;width:1em;height:1em;vertical-align:-0.13em;position:relative"><svg viewBox="0 0 16 16" style="position:absolute;left:0.06em;top:0.04em;width:.88em;height:.88em;overflow:visible"><path d="M1 2.5h14M3 2.5v12M3 6.5h10M3 10.5h10M3 14.5h11M8 2.5v12M13 6.5v8" stroke="currentColor" stroke-width="1.2" fill="none" opacity="1.0"/></svg></span><span style="display:inline-block;width:1em;height:1em;vertical-align:-0.13em;position:relative"><svg viewBox="0 0 16 16" style="position:absolute;left:0.06em;top:0.04em;width:.88em;height:.88em;overflow:visible"><path d="M1.5 5h13M8 1v14M7.5 5.5l-6 7M8.5 5.5l6 7M3 9.5h10" stroke="currentColor" stroke-width="1.2" fill="none" opacity="1.0"/></svg></span><span style="display:inline-block;width:1em;height:1em;vertical-align:-0.13em;position:relative"><svg viewBox="0 0 16 16" style="position:absolute;left:0.06em;top:0.04em;width:.88em;height:.88em;overflow:visible"><path d="M8 1v2.5M1.5 3.5h13M3.5 6h9v8.5h-9zM3.5 9h9M3.5 11.8h9M8 6v8.5" stroke="currentColor" stroke-width="1.2" fill="none" opacity="1.0"/></svg></span><span style="display:inline-block;width:1em;height:1em;vertical-align:-0.13em;position:relative"><svg viewBox="0 0 16 16" style="position:absolute;left:0.06em;top:0.04em;width:.88em;height:.88em;overflow:visible"><path d="M8 1v2.5M1.5 3.5h13M3.5 6h9v8.5h-9zM3.5 9h9M3.5 11.8h9M8 6v8.5" stroke="currentColor" stroke-width="1.2" fill="none" opacity="1.0"/></svg></span><span style="display:inline-block;width:1em;height:1em;vertical-align:-0.13em;position:relative"><svg viewBox="0 0 16 16" style="position:absolute;left:0.06em;top:0.04em;width:.88em;height:.88em;overflow:visible"><path d="M1 2.5h14M3 2.5v12M3 6.5h10M3 10.5h10M3 14.5h11M8 2.5v12M13 6.5v8" stroke="currentColor" stroke-width="1.2" fill="none" opacity="1.0"/></svg></span><span style="display:inline-block;width:1em;height:1em;vertical-align:-0.13em;position:relative"><svg viewBox="0 0 16 16" style="position:absolute;left:0.06em;top:0.04em;width:.88em;height:.88em;overflow:visible"><path d="M8 1v2.5M1.5 3.5h13M3.5 6h9v8.5h-9zM3.5 9h9M3.5 11.8h9M8 6v8.5" stroke="currentColor" stroke-width="1.2" fill="none" opacity="1.0"/></svg></span><span style="display:inline-block;width:1em;height:1em;vertical-align:-0.13em;position:relative"><svg viewBox="0 0 16 16" style="position:absolute;left:0.06em;top:0.04em;width:.88em;height:.88em;overflow:visible"><path d="M1 2v12M1 2h6v12H1M1 8h6M9 1.5h6M12 1.5v13M9 6h6M9 10h6M9 14.5h6" stroke="currentColor" stroke-width="1.2" fill="none" opacity="1.0"/></svg></span>...</div>
<svg style="left:102px;top:8.5px;width:16px;height:15.36px" viewBox="0 0 25 24" ><path d="m24.507 9.5-.034-.09L21.082.562a.896.896 0 0 0-1.694.091l-2.29 7.01H7.825L5.535.653a.898.898 0 0 0-1.694-.09L.451 9.411.416 9.5a6.297 6.297 0 0 0 2.09 7.278l.012.01.03.022 5.16 3.867 2.56 1.935 1.554 1.176a1.051 1.051 0 0 0 1.268 0l1.555-1.176 2.56-1.935 5.197-3.89.014-.01A6.297 6.297 0 0 0 24.507 9.5Z" fill="#E24329"/><path d="m24.507 9.5-.034-.09a11.44 11.44 0 0 0-4.56 2.051l-7.447 5.632 4.742 3.584 5.197-3.89.014-.01A6.297 6.297 0 0 0 24.507 9.5Z" fill="#FC6D26"/><path d="m7.707 20.677 2.56 1.935 1.555 1.176a1.051 1.051 0 0 0 1.268 0l1.555-1.176 2.56-1.935-4.743-3.584-4.755 3.584Z" fill="#FCA326"/><path d="M5.01 11.461a11.43 11.43 0 0 0-4.56-2.05L.416 9.5a6.297 6.297 0 0 0 2.09 7.278l.012.01.03.022 5.16 3.867 4.745-3.584-7.444-5.632Z" fill="#FC6D26"/></svg>
<svg style="left:135px;top:8px;width:17px;height:17px" viewBox="0 0 17 17" ><rect width="17" height="17" rx="3" fill="#e8a55e"/><path d="M4 3h9v11H4z" stroke="#fff" stroke-width="1.5" fill="none"/></svg>
<svg style="left:258px;top:8px;width:16px;height:17px" viewBox="0 0 16 17" ><rect width="16" height="17" fill="#d4294e"/><path d="M6 3v9h6" stroke="#fff" stroke-width="2" fill="none"/></svg>
<svg style="left:356px;top:8px;width:16px;height:17px" viewBox="0 0 16 17" ><rect width="16" height="17" rx="2" fill="#1772f6"/><path d="M2 4h5M4.5 2v6M2 8h5M4.5 8l-2.5 6M4.5 8l2.5 5M9 4h5v9H9zM9 13h5" stroke="#fff" stroke-width="1.6" fill="none"/></svg>
<svg style="left:507px;top:8px;width:17px;height:17px" viewBox="0 0 17 17" ><path d="M14 3A7 7 0 1 0 15 11H9V8h7" stroke="#d8222a" stroke-width="3.5" fill="none"/></svg>
<svg style="left:655px;top:8px;width:16px;height:17px" viewBox="0 0 16 17" ><path d="M2 15c2-1 3-4 3-7s2-5 4-5 3 2 3 4-2 3-3 3M9 10l5 5" stroke="#202124" stroke-width="1.6" fill="none"/></svg>
<svg style="left:806px;top:8px;width:16px;height:17px" viewBox="0 0 16 17" ><rect width="16" height="17" rx="2" fill="#0f9d58"/><path d="M3 5h10M8 5v10" stroke="#fff" stroke-width="2"/></svg>
<svg style="left:856px;top:8px;width:17px;height:17px" viewBox="0 0 17 17" ><circle cx="8.5" cy="8.5" r="8.5" fill="#1877f2"/><path d="M9.5 17v-6h2l.4-2.4H9.5V7c0-.7.3-1.2 1.3-1.2H12V3.7c-.3 0-1-.1-1.9-.1-1.9 0-3.1 1.1-3.1 3.2v1.8H5V11h2v6z" fill="#fff"/></svg>
<svg style="left:1007px;top:8px;width:15px;height:17px" viewBox="0 0 15 17" ><circle cx="7" cy="5" r="4" fill="#e0b070"/><path d="M2 16c1-5 9-5 10 0z" fill="#c8a46a"/></svg>
<svg style="left:1153px;top:8px;width:17px;height:17px" viewBox="0 0 17 17" ><rect width="17" height="17" rx="2" fill="#f5c6c0"/><path d="M12 4c-4-1-8 2-7 7 1 3 5 3 7 1V9H9" stroke="#e0523f" stroke-width="1.6" fill="none"/></svg>
</div>
<div id="nav">
<svg style="left:12px;top:12px;width:30px;height:28.8px" viewBox="0 0 25 24" ><path d="m24.507 9.5-.034-.09L21.082.562a.896.896 0 0 0-1.694.091l-2.29 7.01H7.825L5.535.653a.898.898 0 0 0-1.694-.09L.451 9.411.416 9.5a6.297 6.297 0 0 0 2.09 7.278l.012.01.03.022 5.16 3.867 2.56 1.935 1.554 1.176a1.051 1.051 0 0 0 1.268 0l1.555-1.176 2.56-1.935 5.197-3.89.014-.01A6.297 6.297 0 0 0 24.507 9.5Z" fill="#E24329"/><path d="m24.507 9.5-.034-.09a11.44 11.44 0 0 0-4.56 2.051l-7.447 5.632 4.742 3.584 5.197-3.89.014-.01A6.297 6.297 0 0 0 24.507 9.5Z" fill="#FC6D26"/><path d="m7.707 20.677 2.56 1.935 1.555 1.176a1.051 1.051 0 0 0 1.268 0l1.555-1.176 2.56-1.935-4.743-3.584-4.755 3.584Z" fill="#FCA326"/><path d="M5.01 11.461a11.43 11.43 0 0 0-4.56-2.05L.416 9.5a6.297 6.297 0 0 0 2.09 7.278l.012.01.03.022 5.16 3.867 4.745-3.584-7.444-5.632Z" fill="#FC6D26"/></svg>
<svg style="left:67px;top:20px;width:18px;height:12px" viewBox="0 0 18 12" ><path d="M0 1h18M0 6h18M0 11h18" stroke="#d4d4ef" stroke-width="1.8"/></svg>
<div class="t" style="left:93.6px;top:15.96px;font-size:15.4px;line-height:20px;color:#e1e1f5;font-weight:700;font-family:'Liberation Sans',sans-serif;transform:scaleX(0.8560);transform-origin:0 0;">Menu</div>
<svg style="left:1159px;top:17.8px;width:13px;height:14.2px" viewBox="0 0 13 14.2" ><rect x="0" y="0" width="13" height="14.2" rx="2.5" fill="#e1e1f5"/><path d="M6.5 4v6.2M3.4 7.1h6.2" stroke="#292961" stroke-width="1.8"/></svg>
<svg style="left:1186px;top:23px;width:10px;height:7px" viewBox="0 0 10 7" ><path d="M1 1l4 4 4-4" stroke="#e6e6f6" stroke-width="1.7" fill="none"/></svg>
<div class="a" style="left:1211px;top:9px;width:352px;height:34px;border-radius:4px;background:#4d4d7e;border:1px solid #6e6ea0"></div>
<svg style="left:1220px;top:19px;width:16px;height:16px" viewBox="0 0 16 16" ><circle cx="6.5" cy="6.5" r="5.3" stroke="#d0d0e8" stroke-width="1.7" fill="none"/><path d="M10.5 10.5L15 15" stroke="#d0d0e8" stroke-width="1.7"/></svg>
<div class="t" style="left:1241.7px;top:18.16px;font-size:15.4px;line-height:20px;color:#d2d2ea;font-weight:400;font-family:'Liberation Sans',sans-serif;transform:scaleX(0.9422);transform-origin:0 0;">Search GitLab</div>
<div class="a" style="left:1535px;top:16px;width:19px;height:22px;border-radius:3px;background:#6a6a9a"></div>
<div class="t" style="left:1540px;top:17.00px;font-size:14px;line-height:20px;color:#e6e6f6;font-weight:400;font-family:'Liberation Sans',sans-serif;">/</div>
<svg style="left:1573.5px;top:18px;width:17.6px;height:17.6px" viewBox="0 0 16 16" ><path d="M4 2.3h4.2a1.5 1.5 0 0 1 1.5 1.5v8.9a1.5 1.5 0 0 1-1.5 1.5H4a1.5 1.5 0 0 1-1.5-1.5V3.8A1.5 1.5 0 0 1 4 2.3z" stroke="#e1e1f5" stroke-width="1.5" fill="none"/><path d="M9.7 3.6l4 2-3 6.8" stroke="#e1e1f5" stroke-width="1.5" fill="none" stroke-linejoin="round"/></svg>
<div class="a" style="left:1590px;top:19px;width:25px;height:17px;border-radius:9px;background:#c3e6cd;color:#24663b;font-size:13px;line-height:17px;text-align:center">1</div>
<svg style="left:1636px;top:18px;width:18px;height:18px" viewBox="0 0 18 18" ><circle cx="3.5" cy="3.5" r="2" stroke="#e6e6f6" stroke-width="1.7" fill="none"/><circle cx="3.5" cy="14.5" r="2" stroke="#e6e6f6" stroke-width="1.7" fill="none"/><circle cx="14.5" cy="14.5" r="2" stroke="#e6e6f6" stroke-width="1.7" fill="none"/><path d="M3.5 5.5v7M14.5 12.5V6c0-1-1-2-2-2H9M11 1.5L8.5 4 11 6.5" stroke="#e6e6f6" stroke-width="1.7" fill="none"/></svg>
<svg style="left:1660px;top:23px;width:10px;height:7px" viewBox="0 0 10 7" ><path d="M1 1l4 4 4-4" stroke="#e6e6f6" stroke-width="1.7" fill="none"/></svg>
<svg style="left:1698px;top:18px;width:18px;height:18px" viewBox="0 0 18 18" ><path d="M15 9v6H2V2h9" stroke="#e6e6f6" stroke-width="1.8" fill="none"/><path d="M5.5 8l3 3L17 2.5" stroke="#e6e6f6" stroke-width="1.8" fill="none"/></svg>
<div class="a" style="left:1716px;top:19px;width:31px;height:17px;border-radius:9px;background:#cbe2f9;color:#0b5cad;font-size:13px;line-height:17px;text-align:center">13</div>
<svg style="left:1765px;top:19px;width:17px;height:17px" viewBox="0 0 17 17" ><circle cx="8.5" cy="8.5" r="7.3" stroke="#e6e6f6" stroke-width="1.7" fill="none"/><path d="M6.2 6.5a2.4 2.4 0 1 1 3.3 2.2c-.7.3-1 .8-1 1.5v.6" stroke="#e6e6f6" stroke-width="1.7" fill="none"/><circle cx="8.5" cy="13" r="1" fill="#e6e6f6"/></svg>
<div class="a" style="left:1782px;top:15px;width:9px;height:9px;border-radius:5px;background:#d9d9f2;border:1.5px solid #292961"></div>
<svg style="left:1791px;top:23px;width:10px;height:7px" viewBox="0 0 10 7" ><path d="M1 1l4 4 4-4" stroke="#e6e6f6" stroke-width="1.7" fill="none"/></svg>
<svg style="left:1827px;top:14px;width:26px;height:26px" viewBox="0 0 32 32" ><circle cx="16" cy="16" r="16" fill="#fff"/><g fill="#3e9c64" opacity="1"><rect x="7.6" y="7.2" width="16.8" height="17"/><path d="M8.20 -0.50 Q12.10 2.81 16.00 -0.50 Q12.68 3.40 16.00 7.30 Q12.10 3.98 8.20 7.30 Q11.52 3.40 8.20 -0.50Z"/><path d="M16.30 -0.50 Q20.20 2.81 24.10 -0.50 Q20.79 3.40 24.10 7.30 Q20.20 3.98 16.30 7.30 Q19.61 3.40 16.30 -0.50Z"/><path d="M8.20 24.50 Q12.10 27.81 16.00 24.50 Q12.68 28.40 16.00 32.30 Q12.10 28.98 8.20 32.30 Q11.52 28.40 8.20 24.50Z"/><path d="M16.30 24.50 Q20.20 27.81 24.10 24.50 Q20.79 28.40 24.10 32.30 Q20.20 28.98 16.30 32.30 Q19.61 28.40 16.30 24.50Z"/><path d="M-0.30 7.80 Q3.60 11.11 7.50 7.80 Q4.19 11.70 7.50 15.60 Q3.60 12.29 -0.30 15.60 Q3.02 11.70 -0.30 7.80Z"/><path d="M-0.30 16.30 Q3.60 19.61 7.50 16.30 Q4.19 20.20 7.50 24.10 Q3.60 20.79 -0.30 24.10 Q3.02 20.20 -0.30 16.30Z"/><path d="M24.50 7.80 Q28.40 11.11 32.30 7.80 Q28.98 11.70 32.30 15.60 Q28.40 12.29 24.50 15.60 Q27.81 11.70 24.50 7.80Z"/><path d="M24.50 16.30 Q28.40 19.61 32.30 16.30 Q28.98 20.20 32.30 24.10 Q28.40 20.79 24.50 24.10 Q27.81 20.20 24.50 16.30Z"/></g><g stroke="#3e9c64" stroke-width="1.3" opacity=".8"><path d="M4.5 4.5l2 2M27.5 4.5l-2 2M4.5 27.5l2-2M27.5 27.5l-2-2"/></g><g fill="#fff"><circle cx="12.1" cy="11.6" r="1.6"/><circle cx="20.2" cy="11.6" r="1.6"/><circle cx="12.1" cy="20" r="1.6"/><circle cx="20.2" cy="20" r="1.6"/></g></svg>
<svg style="left:1860px;top:23px;width:10px;height:7px" viewBox="0 0 10 7" ><path d="M1 1l4 4 4-4" stroke="#e6e6f6" stroke-width="1.7" fill="none"/></svg>
</div>
<div id="side">
<div class="a" style="left:9px;top:9px;width:35px;height:35px;border-radius:4px;background:#fdf1dd;border:1px solid #ebe3d6"></div>
<div class="t" style="left:21.5px;top:17.26px;font-size:15.4px;line-height:20px;color:#303030;font-weight:400;font-family:'Liberation Sans',sans-serif;transform:scaleX(0.8989);transform-origin:0 0;">N</div>
<div class="t" style="left:53px;top:16.96px;font-size:15.4px;line-height:20px;color:#303030;font-weight:400;font-family:'Liberation Sans',sans-serif;transform:scaleX(1.0284);transform-origin:0 0;-webkit-text-stroke:0.45px currentColor;">newnetcrorecomma</div>
<div class="a" style="left:4px;top:234px;width:272px;height:35px;border-radius:4px;background:#e1e1e8"></div>
<svg style="left:17.6px;top:61.19999999999999px;width:17.6px;height:17.6px" viewBox="0 0 16 16" ><path d="M2 3.5L8 1.5v13l-6-2z" stroke="#303030" stroke-width="1.45" fill="none" stroke-linejoin="round" stroke-linecap="round"/><path d="M8 1.5h3.5c.8 0 1.5.7 1.5 1.5v9.5c0 .8-.7 1.5-1.5 1.5H8" stroke="#303030" stroke-width="1.45" fill="none" stroke-linejoin="round" stroke-linecap="round"/></svg>
<div class="t" style="left:44.5px;top:60.86px;font-size:15.4px;line-height:20px;color:#303030;font-weight:400;font-family:'Liberation Sans',sans-serif;transform:scaleX(1.0132);transform-origin:0 0;">Project information</div>
<svg style="left:17.6px;top:97.5px;width:17.6px;height:17.6px" viewBox="0 0 16 16" ><path d="M2 1h7l4 4v10H2z" stroke="#303030" stroke-width="1.45" fill="none" stroke-linejoin="round" stroke-linecap="round"/><path d="M5 8h5M5 11h3" stroke="#303030" stroke-width="1.45" fill="none" stroke-linejoin="round" stroke-linecap="round"/></svg>
<div class="t" style="left:44.5px;top:97.16px;font-size:15.4px;line-height:20px;color:#303030;font-weight:400;font-family:'Liberation Sans',sans-serif;transform:scaleX(0.9718);transform-origin:0 0;">Repository</div>
<svg style="left:17.6px;top:133.79999999999995px;width:17.6px;height:17.6px" viewBox="0 0 16 16" ><path d="M4 2.3h4.2a1.5 1.5 0 0 1 1.5 1.5v8.9a1.5 1.5 0 0 1-1.5 1.5H4a1.5 1.5 0 0 1-1.5-1.5V3.8A1.5 1.5 0 0 1 4 2.3z" stroke="#303030" stroke-width="1.45" fill="none" stroke-linejoin="round" stroke-linecap="round"/><path d="M9.7 3.6l4 2-3 6.8" stroke="#303030" stroke-width="1.45" fill="none" stroke-linejoin="round" stroke-linecap="round"/></svg>
<div class="t" style="left:44.5px;top:133.46px;font-size:15.4px;line-height:20px;color:#303030;font-weight:400;font-family:'Liberation Sans',sans-serif;transform:scaleX(0.8992);transform-origin:0 0;">Issues</div>
<svg style="left:17.6px;top:170.09999999999997px;width:17.6px;height:17.6px" viewBox="0 0 16 16" ><circle cx="3" cy="3" r="1.8" stroke="#303030" stroke-width="1.45" fill="none" stroke-linejoin="round" stroke-linecap="round"/><circle cx="3" cy="13" r="1.8" stroke="#303030" stroke-width="1.45" fill="none" stroke-linejoin="round" stroke-linecap="round"/><circle cx="13" cy="13" r="1.8" stroke="#303030" stroke-width="1.45" fill="none" stroke-linejoin="round" stroke-linecap="round"/><path d="M3 5v6M13 11V5.5c0-.8-.7-1.5-1.5-1.5H8M10 1.5L7.5 4 10 6.5" stroke="#303030" stroke-width="1.45" fill="none" stroke-linejoin="round" stroke-linecap="round"/></svg>
<div class="t" style="left:44.5px;top:169.76px;font-size:15.4px;line-height:20px;color:#303030;font-weight:400;font-family:'Liberation Sans',sans-serif;transform:scaleX(0.9791);transform-origin:0 0;">Merge requests</div>
<svg style="left:17.6px;top:206.39999999999998px;width:17.6px;height:17.6px" viewBox="0 0 16 16" ><path d="M15.3 .7C10.8 1.2 6.8 4.2 4.8 8.6l2.6 2.6c4.4-2 7.4-6 7.9-10.5z" stroke="#303030" stroke-width="1.45" fill="none" stroke-linejoin="round" stroke-linecap="round"/><path d="M6.4 5.6C3.8 5.2 2 7 1.6 11.4l3.2-.1M10.4 10c.4 4-1.6 5.4-5.8 5.4l.1-3.2" stroke="#303030" stroke-width="1.45" fill="none" stroke-linejoin="round" stroke-linecap="round"/><circle cx="10" cy="6.2" r="1.2" stroke="#303030" stroke-width="1.45" fill="none" stroke-linejoin="round" stroke-linecap="round"/></svg>
<div class="t" style="left:44.5px;top:206.06px;font-size:15.4px;line-height:20px;color:#303030;font-weight:400;font-family:'Liberation Sans',sans-serif;transform:scaleX(0.9545);transform-origin:0 0;">CI/CD</div>
<div class="t" style="left:44.5px;top:242.36px;font-size:15.4px;line-height:20px;color:#303030;font-weight:400;font-family:'Liberation Sans',sans-serif;transform:scaleX(0.9845);transform-origin:0 0;-webkit-text-stroke:0.35px currentColor;">Pipelines</div>
<div class="t" style="left:44.5px;top:278.66px;font-size:15.4px;line-height:20px;color:#303030;font-weight:400;font-family:'Liberation Sans',sans-serif;transform:scaleX(0.9821);transform-origin:0 0;">Editor</div>
<div class="t" style="left:44.5px;top:314.96px;font-size:15.4px;line-height:20px;color:#303030;font-weight:400;font-family:'Liberation Sans',sans-serif;transform:scaleX(0.8919);transform-origin:0 0;">Jobs</div>
<div class="t" style="left:44.5px;top:351.26px;font-size:15.4px;line-height:20px;color:#303030;font-weight:400;font-family:'Liberation Sans',sans-serif;transform:scaleX(0.9322);transform-origin:0 0;">Schedules</div>
<svg style="left:17.6px;top:387.9px;width:17.6px;height:17.6px" viewBox="0 0 16 16" ><path d="M8 1.5l6 2v4c0 3.5-3 6-6 7-3-1-6-3.5-6-7v-4z" stroke="#303030" stroke-width="1.45" fill="none" stroke-linejoin="round" stroke-linecap="round"/><path d="M8 1.5v13" stroke="#303030" stroke-width="1.45" fill="none" stroke-linejoin="round" stroke-linecap="round"/></svg>
<div class="t" style="left:44.5px;top:387.56px;font-size:15.4px;line-height:20px;color:#303030;font-weight:400;font-family:'Liberation Sans',sans-serif;transform:scaleX(0.9892);transform-origin:0 0;">Security &amp; Compliance</div>
<svg style="left:17.6px;top:424.20000000000005px;width:17.6px;height:17.6px" viewBox="0 0 16 16" ><path d="M4.5 1.5h7.5a2 2 0 0 1 2 2v7" stroke="#303030" stroke-width="1.45" fill="none" stroke-linejoin="round" stroke-linecap="round"/><path d="M1.5 5v7.5a2 2 0 0 0 2 2h7.5" stroke="#303030" stroke-width="1.45" fill="none" stroke-linejoin="round" stroke-linecap="round"/><path d="M5.5 5.8l2.6 2.4-2.6 2.4" stroke="#303030" stroke-width="1.45" fill="none" stroke-linejoin="round" stroke-linecap="round"/></svg>
<div class="t" style="left:44.5px;top:423.86px;font-size:15.4px;line-height:20px;color:#303030;font-weight:400;font-family:'Liberation Sans',sans-serif;transform:scaleX(0.9908);transform-origin:0 0;">Deployments</div>
<svg style="left:17.6px;top:460.5px;width:17.6px;height:17.6px" viewBox="0 0 16 16" ><path d="M1.5 6l2.5-4.5h8L14.5 6v8.5h-13z" stroke="#303030" stroke-width="1.45" fill="none" stroke-linejoin="round" stroke-linecap="round"/><path d="M1.5 6h13M8 1.5V6" stroke="#303030" stroke-width="1.45" fill="none" stroke-linejoin="round" stroke-linecap="round"/></svg>
<div class="t" style="left:44.5px;top:460.16px;font-size:15.4px;line-height:20px;color:#303030;font-weight:400;font-family:'Liberation Sans',sans-serif;transform:scaleX(0.9493);transform-origin:0 0;">Packages &amp; Registries</div>
<svg style="left:17.6px;top:496.79999999999995px;width:17.6px;height:17.6px" viewBox="0 0 16 16" ><path d="M3.5 12.5C1 12 .8 8.2 3.3 7.5 3.5 3.5 6 1.5 8 1.5s4.5 2 4.7 6c2.5.7 2.3 4.5-.2 5" stroke="#303030" stroke-width="1.45" fill="none" stroke-linejoin="round" stroke-linecap="round"/><circle cx="8" cy="10.8" r="3" stroke="#303030" stroke-width="1.45" fill="none" stroke-linejoin="round" stroke-linecap="round"/><circle cx="8" cy="10.8" r=".9" fill="#303030"/></svg>
<div class="t" style="left:44.5px;top:496.46px;font-size:15.4px;line-height:20px;color:#303030;font-weight:400;font-family:'Liberation Sans',sans-serif;transform:scaleX(0.9926);transform-origin:0 0;">Infrastructure</div>
<svg style="left:17.6px;top:533.0999999999999px;width:17.6px;height:17.6px" viewBox="0 0 16 16" ><rect x="1.5" y="1.5" width="13" height="10" rx="1" stroke="#303030" stroke-width="1.45" fill="none" stroke-linejoin="round" stroke-linecap="round"/><path d="M5 14.5h6M8 11.5v3M5 8V6M8 8V4M11 8V5" stroke="#303030" stroke-width="1.45" fill="none" stroke-linejoin="round" stroke-linecap="round"/></svg>
<div class="t" style="left:44.5px;top:532.76px;font-size:15.4px;line-height:20px;color:#303030;font-weight:400;font-family:'Liberation Sans',sans-serif;transform:scaleX(1.0521);transform-origin:0 0;">Monitor</div>
<svg style="left:17.6px;top:569.3999999999999px;width:17.6px;height:17.6px" viewBox="0 0 16 16" ><path d="M2 1v13.5h13M5 11V6M8 11V3M11 11V7" stroke="#303030" stroke-width="1.45" fill="none" stroke-linejoin="round" stroke-linecap="round"/></svg>
<div class="t" style="left:44.5px;top:569.06px;font-size:15.4px;line-height:20px;color:#303030;font-weight:400;font-family:'Liberation Sans',sans-serif;transform:scaleX(0.9660);transform-origin:0 0;">Analytics</div>
<svg style="left:17.6px;top:605.7px;width:17.6px;height:17.6px" viewBox="0 0 16 16" ><path d="M3 1.5h10v11H4.5A1.5 1.5 0 0 0 3 14z" stroke="#303030" stroke-width="1.45" fill="none" stroke-linejoin="round" stroke-linecap="round"/><path d="M3 14c0 .5.5 1 1 1h9v-2.5" stroke="#303030" stroke-width="1.45" fill="none" stroke-linejoin="round" stroke-linecap="round"/></svg>
<div class="t" style="left:44.5px;top:605.36px;font-size:15.4px;line-height:20px;color:#303030;font-weight:400;font-family:'Liberation Sans',sans-serif;transform:scaleX(0.9806);transform-origin:0 0;">Wiki</div>
<svg style="left:17.6px;top:642.0px;width:17.6px;height:17.6px" viewBox="0 0 16 16" ><path d="M3.5 1l7 10M12.5 1l-7 10" stroke="#303030" stroke-width="1.45" fill="none" stroke-linejoin="round" stroke-linecap="round"/><circle cx="4" cy="13" r="2" stroke="#303030" stroke-width="1.45" fill="none" stroke-linejoin="round" stroke-linecap="round"/><circle cx="12" cy="13" r="2" stroke="#303030" stroke-width="1.45" fill="none" stroke-linejoin="round" stroke-linecap="round"/></svg>
<div class="t" style="left:44.5px;top:641.66px;font-size:15.4px;line-height:20px;color:#303030;font-weight:400;font-family:'Liberation Sans',sans-serif;transform:scaleX(0.9598);transform-origin:0 0;">Snippets</div>
<svg style="left:17.6px;top:678.3px;width:17.6px;height:17.6px" viewBox="0 0 16 16" ><path d="M8 1l1.6 1.5 2.2-.3.6 2.1 2 1-.6 2.1 1.2 1.9-1.8 1.3-.1 2.2-2.2.2-1.3 1.8L8 13.8l-1.9 1-1.3-1.8-2.2-.2-.1-2.2L.9 9.3 2 7.4l-.6-2.1 2-1 .6-2.1 2.2.3z" stroke="#303030" stroke-width="1.45" fill="none" stroke-linejoin="round" stroke-linecap="round"/><circle cx="8" cy="8" r="2.5" stroke="#303030" stroke-width="1.45" fill="none" stroke-linejoin="round" stroke-linecap="round"/></svg>
<div class="t" style="left:44.5px;top:677.96px;font-size:15.4px;line-height:20px;color:#303030;font-weight:400;font-family:'Liberation Sans',sans-serif;transform:scaleX(0.9708);transform-origin:0 0;">Settings</div>
<div class="cnt" style="top:134px">0</div>
<div class="cnt" style="top:170px">0</div>
<div class="a" style="left:0;top:823px;width:281px;height:1px;background:#dcdcde"></div>
<svg style="left:20px;top:843px;width:14px;height:14px" viewBox="0 0 14 14" ><path d="M7 2L2 7l5 5M12 2L7 7l5 5" stroke="#303030" stroke-width="1.45" fill="none" stroke-linejoin="round" stroke-linecap="round"/></svg>
<div class="t" style="left:44.5px;top:841.16px;font-size:15.4px;line-height:20px;color:#303030;font-weight:400;font-family:'Liberation Sans',sans-serif;transform:scaleX(0.9646);transform-origin:0 0;">Collapse sidebar</div>
</div>
<div class="t" style="left:406.6px;top:172.93px;font-size:13.2px;line-height:20px;color:#737278;font-weight:400;font-family:'Liberation Sans',sans-serif;transform:scaleX(0.9652);transform-origin:0 0;">Ku Mark</div>
<svg style="left:461px;top:179px;width:6px;height:9px" viewBox="0 0 6 9" ><path d="M1.2 1.2l3.3 3.3-3.3 3.3" stroke="#89888d" stroke-width="1.3" fill="none"/></svg>
<div class="t" style="left:476.6px;top:172.93px;font-size:13.2px;line-height:20px;color:#737278;font-weight:400;font-family:'Liberation Sans',sans-serif;transform:scaleX(0.9878);transform-origin:0 0;">newnetcrorecomma</div>
<svg style="left:599px;top:179px;width:6px;height:9px" viewBox="0 0 6 9" ><path d="M1.2 1.2l3.3 3.3-3.3 3.3" stroke="#89888d" stroke-width="1.3" fill="none"/></svg>
<div class="t" style="left:615px;top:172.93px;font-size:13.2px;line-height:20px;color:#303030;font-weight:400;font-family:'Liberation Sans',sans-serif;transform:scaleX(0.9714);transform-origin:0 0;-webkit-text-stroke:0.3px currentColor;">Pipelines</div>
<div class="hr" style="top:208px"></div>
<div class="t" style="left:419.3px;top:225.46px;font-size:15.4px;line-height:20px;color:#303030;font-weight:400;font-family:'Liberation Sans',sans-serif;transform:scaleX(1.0404);transform-origin:0 0;-webkit-text-stroke:0.3px currentColor;">All</div>
<div class="a" style="left:446px;top:227px;width:33px;height:17px;border-radius:9px;background:#ececef"></div>
<div class="t" style="left:455.3px;top:225.43px;font-size:13.2px;line-height:20px;color:#525252;font-weight:400;font-family:'Liberation Sans',sans-serif;transform:scaleX(0.9747);transform-origin:0 0;">26</div>
<div class="t" style="left:505.2px;top:225.46px;font-size:15.4px;line-height:20px;color:#303030;font-weight:400;font-family:'Liberation Sans',sans-serif;transform:scaleX(0.9452);transform-origin:0 0;">Finished</div>
<div class="t" style="left:592.2px;top:225.46px;font-size:15.4px;line-height:20px;color:#303030;font-weight:400;font-family:'Liberation Sans',sans-serif;transform:scaleX(0.9242);transform-origin:0 0;">Branches</div>
<div class="t" style="left:684px;top:225.46px;font-size:15.4px;line-height:20px;color:#303030;font-weight:400;font-family:'Liberation Sans',sans-serif;transform:scaleX(0.8980);transform-origin:0 0;">Tags</div>
<div class="a" style="left:406px;top:259px;width:86px;height:2px;background:#6666c4"></div>
<div class="hr" style="top:261px"></div>
<div class="a" style="left:1425px;top:218px;width:158px;height:35px;border:1px solid #bfbfc3;border-radius:4px;background:#fff"></div>
<div class="t" style="left:1437.9px;top:225.26px;font-size:15.4px;line-height:20px;color:#303030;font-weight:400;font-family:'Liberation Sans',sans-serif;transform:scaleX(0.9596);transform-origin:0 0;">Clear runner caches</div>
<div class="a" style="left:1593px;top:218px;width:65px;height:35px;border:1px solid #bfbfc3;border-radius:4px;background:#fff"></div>
<div class="t" style="left:1606.2px;top:225.26px;font-size:15.4px;line-height:20px;color:#303030;font-weight:400;font-family:'Liberation Sans',sans-serif;transform:scaleX(0.9786);transform-origin:0 0;">CI lint</div>
<div class="a" style="left:1667px;top:218px;width:112px;height:35px;border-radius:4px;background:#1f75cb;border:1px solid #1068bf"></div>
<div class="t" style="left:1680.8px;top:225.26px;font-size:15.4px;line-height:20px;color:#fff;font-weight:400;font-family:'Liberation Sans',sans-serif;transform:scaleX(0.9839);transform-origin:0 0;">Run pipeline</div>
<div class="a" style="left:406px;top:262px;width:1373px;height:72px;background:#fafafa"></div>
<div class="hr" style="top:334px"></div>
<div class="a" style="left:423px;top:280px;width:1167px;height:35px;border:1px solid #89888d;border-radius:4px;background:#fff"></div>
<div class="a" style="left:1555px;top:281px;width:1px;height:33px;background:#89888d"></div>
<div class="t" style="left:439px;top:288.36px;font-size:15.4px;line-height:20px;color:#89888d;font-weight:400;font-family:'Liberation Sans',sans-serif;transform:scaleX(0.9835);transform-origin:0 0;">Filter pipelines</div>
<svg style="left:1564px;top:290px;width:16px;height:16px" viewBox="0 0 16 16" ><circle cx="6.7" cy="6.7" r="5.5" stroke="#303030" stroke-width="1.5" fill="none"/><path d="M10.8 10.8L15 15" stroke="#303030" stroke-width="1.6"/></svg>
<div class="a" style="left:1603px;top:280px;width:157px;height:35px;border:1px solid #bfbfc3;border-radius:4px;background:#fff"></div>
<div class="t" style="left:1616.7px;top:287.76px;font-size:15.4px;line-height:20px;color:#303030;font-weight:400;font-family:'Liberation Sans',sans-serif;transform:scaleX(0.9632);transform-origin:0 0;">Show Pipeline ID</div>
<svg style="left:1739px;top:294px;width:9px;height:6px" viewBox="0 0 9 6" ><path d="M1 1l3.5 3.5L8 1" stroke="#303030" stroke-width="1.5" fill="none"/></svg>
<div class="t" style="left:423.8px;top:352.03px;font-size:13.2px;line-height:20px;color:#303030;font-weight:400;font-family:'Liberation Sans',sans-serif;transform:scaleX(0.9682);transform-origin:0 0;-webkit-text-stroke:0.3px currentColor;">Status</div>
<div class="t" style="left:641px;top:352.03px;font-size:13.2px;line-height:20px;color:#303030;font-weight:400;font-family:'Liberation Sans',sans-serif;transform:scaleX(0.9928);transform-origin:0 0;-webkit-text-stroke:0.3px currentColor;">Pipeline</div>
<div class="t" style="left:1074.3px;top:352.03px;font-size:13.2px;line-height:20px;color:#303030;font-weight:400;font-family:'Liberation Sans',sans-serif;transform:scaleX(1.0110);transform-origin:0 0;-webkit-text-stroke:0.3px currentColor;">Triggerer</div>
<div class="t" style="left:1218.7px;top:352.03px;font-size:13.2px;line-height:20px;color:#303030;font-weight:400;font-family:'Liberation Sans',sans-serif;transform:scaleX(0.9327);transform-origin:0 0;-webkit-text-stroke:0.3px currentColor;">Stages</div>
<div class="hr" style="top:388.6px"></div>
<div class="badge pass" style="top:401.4px;width:87px"></div>
<svg style="left:432.5px;top:409.20000000000005px;width:17px;height:17px" viewBox="0 0 17 17" ><circle cx="8.5" cy="8.5" r="7.6" stroke="#108548" stroke-width="1.7" fill="none"/><path d="M5.3 8.8l2.2 2.2 4.2-4.4" stroke="#108548" stroke-width="1.7" fill="none"/></svg>
<div class="t" style="left:454.8px;top:405.46px;font-size:15.4px;line-height:20px;color:#108548;font-weight:400;font-family:'Liberation Sans',sans-serif;transform:scaleX(0.9186);transform-origin:0 0;">passed</div>
<svg style="left:424px;top:437.3px;width:12px;height:13px" viewBox="0 0 12 13" ><circle cx="6" cy="7.3" r="4.9" stroke="#666" stroke-width="1.4" fill="none"/><path d="M6 7.5L4.6 5.2M4 .8h4M10 2.5l1-1" stroke="#666" stroke-width="1.4" fill="none"/></svg>
<div class="t" style="left:445.8px;top:434.56px;font-size:15.4px;line-height:20px;color:#666;font-weight:400;font-family:'Liberation Sans',sans-serif;transform:scaleX(0.9179);transform-origin:0 0;">00:03:15</div>
<svg style="left:424px;top:456.6px;width:12px;height:11px" viewBox="0 0 12 11" ><rect x=".7" y="1.7" width="10.6" height="8.6" rx=".8" stroke="#666" stroke-width="1.4" fill="none"/><path d="M.7 4.3h10.6M3.5 0v2.5M8.5 0v2.5" stroke="#666" stroke-width="1.4"/><rect x="7.5" y="6.5" width="1.8" height="1.8" fill="#666"/></svg>
<div class="t" style="left:445.8px;top:452.26px;font-size:15.4px;line-height:20px;color:#666;font-weight:400;font-family:'Liberation Sans',sans-serif;transform:scaleX(0.9624);transform-origin:0 0;">43 seconds ago</div>
<div class="t" style="left:640.8px;top:406.06px;font-size:15.4px;line-height:20px;color:#303030;font-weight:400;font-family:'Liberation Sans',sans-serif;transform:scaleX(0.9559);transform-origin:0 0;"><span style="display:inline-block;width:1em;height:1em;vertical-align:-0.13em;position:relative"><svg viewBox="0 0 16 16" style="position:absolute;left:0.06em;top:0.04em;width:.88em;height:.88em;overflow:visible"><path d="M1 4.5h14M4.5 1v6M11.5 1v6M2 8.5h12v6H2zM8 8.5v6M2 11.5h12" stroke="currentColor" stroke-width="1.2" fill="none" opacity="1.0"/></svg></span><span style="display:inline-block;width:1em;height:1em;vertical-align:-0.13em;position:relative"><svg viewBox="0 0 16 16" style="position:absolute;left:0.06em;top:0.04em;width:.88em;height:.88em;overflow:visible"><path d="M2 1.5v13M2 1.5h12v13H2M2 5.5h12M2 9.5h12M6 1.5v13M10 1.5v13" stroke="currentColor" stroke-width="1.2" fill="none" opacity="1.0"/></svg></span> Gitlab CICD</div>
<div class="t" style="left:640.8px;top:427.56px;font-size:15.4px;line-height:20px;color:#1b6ac0;font-weight:400;font-family:'Liberation Sans',sans-serif;transform:scaleX(0.9695);transform-origin:0 0;">#545900984</div>
<div class="a" style="left:640px;top:444.5px;width:88px;height:1px;background:#1b6ac0"></div>
<svg style="left:739px;top:430.40000000000003px;width:14px;height:15.5px" viewBox="0 0 14 15.5" ><circle cx="3" cy="12.5" r="2.1" stroke="#303030" stroke-width="1.5" fill="none"/><circle cx="3" cy="3" r="2.1" stroke="#303030" stroke-width="1.5" fill="none"/><circle cx="11" cy="3" r="2.1" stroke="#303030" stroke-width="1.5" fill="none"/><path d="M3 5.1v5.3M11 5.1c0 4-7.5 2.5-7.8 5.6" stroke="#303030" stroke-width="1.5" fill="none"/></svg>
<div class="t" style="left:761.7px;top:429.09px;font-size:14.3px;line-height:20px;color:#303030;font-weight:400;font-family:'Liberation Mono',monospace;transform:scaleX(0.9904);transform-origin:0 0;">main</div>
<svg style="left:809px;top:432.40000000000003px;width:18px;height:12px" viewBox="0 0 18 12" ><circle cx="9" cy="6" r="3.6" stroke="#303030" stroke-width="1.7" fill="none"/><path d="M0 6h5.4M12.6 6H18" stroke="#303030" stroke-width="1.7"/></svg>
<div class="t" style="left:834.4px;top:429.09px;font-size:14.3px;line-height:20px;color:#1b6ac0;font-weight:400;font-family:'Liberation Mono',monospace;transform:scaleX(1.0111);transform-origin:0 0;">f220b95e</div>
<svg style="left:911px;top:430.40000000000003px;width:17px;height:17px" viewBox="0 0 32 32" ><circle cx="16" cy="16" r="16" fill="#d5ecdc"/><g fill="#3e9c64" opacity="0.85"><rect x="7.6" y="7.2" width="16.8" height="17"/><path d="M8.20 -0.50 Q12.10 2.81 16.00 -0.50 Q12.68 3.40 16.00 7.30 Q12.10 3.98 8.20 7.30 Q11.52 3.40 8.20 -0.50Z"/><path d="M16.30 -0.50 Q20.20 2.81 24.10 -0.50 Q20.79 3.40 24.10 7.30 Q20.20 3.98 16.30 7.30 Q19.61 3.40 16.30 -0.50Z"/><path d="M8.20 24.50 Q12.10 27.81 16.00 24.50 Q12.68 28.40 16.00 32.30 Q12.10 28.98 8.20 32.30 Q11.52 28.40 8.20 24.50Z"/><path d="M16.30 24.50 Q20.20 27.81 24.10 24.50 Q20.79 28.40 24.10 32.30 Q20.20 28.98 16.30 32.30 Q19.61 28.40 16.30 24.50Z"/><path d="M-0.30 7.80 Q3.60 11.11 7.50 7.80 Q4.19 11.70 7.50 15.60 Q3.60 12.29 -0.30 15.60 Q3.02 11.70 -0.30 7.80Z"/><path d="M-0.30 16.30 Q3.60 19.61 7.50 16.30 Q4.19 20.20 7.50 24.10 Q3.60 20.79 -0.30 24.10 Q3.02 20.20 -0.30 16.30Z"/><path d="M24.50 7.80 Q28.40 11.11 32.30 7.80 Q28.98 11.70 32.30 15.60 Q28.40 12.29 24.50 15.60 Q27.81 11.70 24.50 7.80Z"/><path d="M24.50 16.30 Q28.40 19.61 32.30 16.30 Q28.98 20.20 32.30 24.10 Q28.40 20.79 24.50 24.10 Q27.81 20.20 24.50 16.30Z"/></g><g stroke="#3e9c64" stroke-width="1.3" opacity=".8"><path d="M4.5 4.5l2 2M27.5 4.5l-2 2M4.5 27.5l2-2M27.5 27.5l-2-2"/></g><g fill="#fff"><circle cx="12.1" cy="11.6" r="1.6"/><circle cx="20.2" cy="11.6" r="1.6"/><circle cx="12.1" cy="20" r="1.6"/><circle cx="20.2" cy="20" r="1.6"/></g></svg>
<div class="a latest" style="left:640px;top:454.2px;width:48.7px;height:17px;border-radius:9px"></div>
<div class="t" style="left:649.15px;top:452.93px;font-size:13.2px;line-height:20px;color:#24663b;font-weight:400;font-family:'Liberation Sans',sans-serif;transform:scaleX(0.9641);transform-origin:0 0;">latest</div>
<svg style="left:1084px;top:407.8px;width:33px;height:33px" viewBox="0 0 32 32" ><circle cx="16" cy="16" r="16" fill="#fff"/><g fill="#3e9c64" opacity="1"><rect x="7.6" y="7.2" width="16.8" height="17"/><path d="M8.20 -0.50 Q12.10 2.81 16.00 -0.50 Q12.68 3.40 16.00 7.30 Q12.10 3.98 8.20 7.30 Q11.52 3.40 8.20 -0.50Z"/><path d="M16.30 -0.50 Q20.20 2.81 24.10 -0.50 Q20.79 3.40 24.10 7.30 Q20.20 3.98 16.30 7.30 Q19.61 3.40 16.30 -0.50Z"/><path d="M8.20 24.50 Q12.10 27.81 16.00 24.50 Q12.68 28.40 16.00 32.30 Q12.10 28.98 8.20 32.30 Q11.52 28.40 8.20 24.50Z"/><path d="M16.30 24.50 Q20.20 27.81 24.10 24.50 Q20.79 28.40 24.10 32.30 Q20.20 28.98 16.30 32.30 Q19.61 28.40 16.30 24.50Z"/><path d="M-0.30 7.80 Q3.60 11.11 7.50 7.80 Q4.19 11.70 7.50 15.60 Q3.60 12.29 -0.30 15.60 Q3.02 11.70 -0.30 7.80Z"/><path d="M-0.30 16.30 Q3.60 19.61 7.50 16.30 Q4.19 20.20 7.50 24.10 Q3.60 20.79 -0.30 24.10 Q3.02 20.20 -0.30 16.30Z"/><path d="M24.50 7.80 Q28.40 11.11 32.30 7.80 Q28.98 11.70 32.30 15.60 Q28.40 12.29 24.50 15.60 Q27.81 11.70 24.50 7.80Z"/><path d="M24.50 16.30 Q28.40 19.61 32.30 16.30 Q28.98 20.20 32.30 24.10 Q28.40 20.79 24.50 24.10 Q27.81 20.20 24.50 16.30Z"/></g><g stroke="#3e9c64" stroke-width="1.3" opacity=".8"><path d="M4.5 4.5l2 2M27.5 4.5l-2 2M4.5 27.5l2-2M27.5 27.5l-2-2"/></g><g fill="#fff"><circle cx="12.1" cy="11.6" r="1.6"/><circle cx="20.2" cy="11.6" r="1.6"/><circle cx="12.1" cy="20" r="1.6"/><circle cx="20.2" cy="20" r="1.6"/></g></svg>
<svg style="left:1218.5px;top:406.8px;width:26px;height:26px" viewBox="0 0 26 26" ><circle cx="13" cy="13" r="12.2" stroke="#108548" stroke-width="1.6" fill="#fff"/><path d="M8.4 13.3l3.3 3.1 5.9-6" stroke="#108548" stroke-width="2.7" fill="none" stroke-linecap="round" stroke-linejoin="round"/></svg>
<div class="a" style="left:1244.3px;top:418.8px;width:5px;height:2px;background:#bfbfc3"></div>
<svg style="left:1248.8px;top:406.8px;width:26px;height:26px" viewBox="0 0 26 26" ><circle cx="13" cy="13" r="12.2" stroke="#737278" stroke-width="1.6" fill="#fff"/><path d="M9.3 9.5l3.4 3.5-3.4 3.5M13.3 9.5l3.4 3.5-3.4 3.5" stroke="#737278" stroke-width="1.7" fill="none"/></svg>
<div class="grp" style="left:1665px;top:407.4px;width:96px"></div>
<div class="a" style="left:1726px;top:408.4px;width:1px;height:33px;background:#bfbfc3"></div>
<svg style="left:1683px;top:417.70000000000005px;width:9px;height:13px" viewBox="0 0 9 13" ><path d="M.5 .8v11.4L8.7 6.5z" fill="#525252"/></svg>
<svg style="left:1705px;top:421.90000000000003px;width:9px;height:6px" viewBox="0 0 9 6" ><path d="M1 1l3.5 3.5L8 1" stroke="#303030" stroke-width="1.4" fill="none"/></svg>
<svg style="left:1740.5px;top:415.90000000000003px;width:6px;height:18px" viewBox="0 0 6 18" ><circle cx="3" cy="2.5" r="2" fill="#525252"/><circle cx="3" cy="9" r="2" fill="#525252"/><circle cx="3" cy="15.5" r="2" fill="#525252"/></svg>
<div class="hr" style="top:492.3px"></div>
<div class="badge pass" style="top:505.1px;width:87px"></div>
<svg style="left:432.5px;top:512.9px;width:17px;height:17px" viewBox="0 0 17 17" ><circle cx="8.5" cy="8.5" r="7.6" stroke="#108548" stroke-width="1.7" fill="none"/><path d="M5.3 8.8l2.2 2.2 4.2-4.4" stroke="#108548" stroke-width="1.7" fill="none"/></svg>
<div class="t" style="left:454.8px;top:509.16px;font-size:15.4px;line-height:20px;color:#108548;font-weight:400;font-family:'Liberation Sans',sans-serif;transform:scaleX(0.9186);transform-origin:0 0;">passed</div>
<svg style="left:424px;top:541.0px;width:12px;height:13px" viewBox="0 0 12 13" ><circle cx="6" cy="7.3" r="4.9" stroke="#666" stroke-width="1.4" fill="none"/><path d="M6 7.5L4.6 5.2M4 .8h4M10 2.5l1-1" stroke="#666" stroke-width="1.4" fill="none"/></svg>
<div class="t" style="left:445.8px;top:538.26px;font-size:15.4px;line-height:20px;color:#666;font-weight:400;font-family:'Liberation Sans',sans-serif;transform:scaleX(0.9179);transform-origin:0 0;">00:04:16</div>
<svg style="left:424px;top:560.3px;width:12px;height:11px" viewBox="0 0 12 11" ><rect x=".7" y="1.7" width="10.6" height="8.6" rx=".8" stroke="#666" stroke-width="1.4" fill="none"/><path d="M.7 4.3h10.6M3.5 0v2.5M8.5 0v2.5" stroke="#666" stroke-width="1.4"/><rect x="7.5" y="6.5" width="1.8" height="1.8" fill="#666"/></svg>
<div class="t" style="left:445.8px;top:555.96px;font-size:15.4px;line-height:20px;color:#666;font-weight:400;font-family:'Liberation Sans',sans-serif;transform:scaleX(0.9825);transform-origin:0 0;">6 minutes ago</div>
<div class="t" style="left:640.8px;top:509.76px;font-size:15.4px;line-height:20px;color:#303030;font-weight:400;font-family:'Liberation Sans',sans-serif;transform:scaleX(1.2139);transform-origin:0 0;">tttttttttttttttttttttt</div>
<div class="t" style="left:640.8px;top:531.26px;font-size:15.4px;line-height:20px;color:#1b6ac0;font-weight:400;font-family:'Liberation Sans',sans-serif;transform:scaleX(0.9695);transform-origin:0 0;">#545892180</div>
<div class="a" style="left:640px;top:548.2px;width:88px;height:1px;background:#1b6ac0"></div>
<svg style="left:739px;top:534.1px;width:14px;height:15.5px" viewBox="0 0 14 15.5" ><circle cx="3" cy="12.5" r="2.1" stroke="#303030" stroke-width="1.5" fill="none"/><circle cx="3" cy="3" r="2.1" stroke="#303030" stroke-width="1.5" fill="none"/><circle cx="11" cy="3" r="2.1" stroke="#303030" stroke-width="1.5" fill="none"/><path d="M3 5.1v5.3M11 5.1c0 4-7.5 2.5-7.8 5.6" stroke="#303030" stroke-width="1.5" fill="none"/></svg>
<div class="t" style="left:761.7px;top:532.79px;font-size:14.3px;line-height:20px;color:#303030;font-weight:400;font-family:'Liberation Mono',monospace;transform:scaleX(0.9904);transform-origin:0 0;">main</div>
<svg style="left:809px;top:536.1px;width:18px;height:12px" viewBox="0 0 18 12" ><circle cx="9" cy="6" r="3.6" stroke="#303030" stroke-width="1.7" fill="none"/><path d="M0 6h5.4M12.6 6H18" stroke="#303030" stroke-width="1.7"/></svg>
<div class="t" style="left:834.4px;top:532.79px;font-size:14.3px;line-height:20px;color:#1b6ac0;font-weight:400;font-family:'Liberation Mono',monospace;transform:scaleX(1.0111);transform-origin:0 0;">91355b49</div>
<svg style="left:911px;top:534.1px;width:17px;height:17px" viewBox="0 0 32 32" ><circle cx="16" cy="16" r="16" fill="#d5ecdc"/><g fill="#3e9c64" opacity="0.85"><rect x="7.6" y="7.2" width="16.8" height="17"/><path d="M8.20 -0.50 Q12.10 2.81 16.00 -0.50 Q12.68 3.40 16.00 7.30 Q12.10 3.98 8.20 7.30 Q11.52 3.40 8.20 -0.50Z"/><path d="M16.30 -0.50 Q20.20 2.81 24.10 -0.50 Q20.79 3.40 24.10 7.30 Q20.20 3.98 16.30 7.30 Q19.61 3.40 16.30 -0.50Z"/><path d="M8.20 24.50 Q12.10 27.81 16.00 24.50 Q12.68 28.40 16.00 32.30 Q12.10 28.98 8.20 32.30 Q11.52 28.40 8.20 24.50Z"/><path d="M16.30 24.50 Q20.20 27.81 24.10 24.50 Q20.79 28.40 24.10 32.30 Q20.20 28.98 16.30 32.30 Q19.61 28.40 16.30 24.50Z"/><path d="M-0.30 7.80 Q3.60 11.11 7.50 7.80 Q4.19 11.70 7.50 15.60 Q3.60 12.29 -0.30 15.60 Q3.02 11.70 -0.30 7.80Z"/><path d="M-0.30 16.30 Q3.60 19.61 7.50 16.30 Q4.19 20.20 7.50 24.10 Q3.60 20.79 -0.30 24.10 Q3.02 20.20 -0.30 16.30Z"/><path d="M24.50 7.80 Q28.40 11.11 32.30 7.80 Q28.98 11.70 32.30 15.60 Q28.40 12.29 24.50 15.60 Q27.81 11.70 24.50 7.80Z"/><path d="M24.50 16.30 Q28.40 19.61 32.30 16.30 Q28.98 20.20 32.30 24.10 Q28.40 20.79 24.50 24.10 Q27.81 20.20 24.50 16.30Z"/></g><g stroke="#3e9c64" stroke-width="1.3" opacity=".8"><path d="M4.5 4.5l2 2M27.5 4.5l-2 2M4.5 27.5l2-2M27.5 27.5l-2-2"/></g><g fill="#fff"><circle cx="12.1" cy="11.6" r="1.6"/><circle cx="20.2" cy="11.6" r="1.6"/><circle cx="12.1" cy="20" r="1.6"/><circle cx="20.2" cy="20" r="1.6"/></g></svg>
<svg style="left:1084px;top:511.5px;width:33px;height:33px" viewBox="0 0 32 32" ><circle cx="16" cy="16" r="16" fill="#fff"/><g fill="#3e9c64" opacity="1"><rect x="7.6" y="7.2" width="16.8" height="17"/><path d="M8.20 -0.50 Q12.10 2.81 16.00 -0.50 Q12.68 3.40 16.00 7.30 Q12.10 3.98 8.20 7.30 Q11.52 3.40 8.20 -0.50Z"/><path d="M16.30 -0.50 Q20.20 2.81 24.10 -0.50 Q20.79 3.40 24.10 7.30 Q20.20 3.98 16.30 7.30 Q19.61 3.40 16.30 -0.50Z"/><path d="M8.20 24.50 Q12.10 27.81 16.00 24.50 Q12.68 28.40 16.00 32.30 Q12.10 28.98 8.20 32.30 Q11.52 28.40 8.20 24.50Z"/><path d="M16.30 24.50 Q20.20 27.81 24.10 24.50 Q20.79 28.40 24.10 32.30 Q20.20 28.98 16.30 32.30 Q19.61 28.40 16.30 24.50Z"/><path d="M-0.30 7.80 Q3.60 11.11 7.50 7.80 Q4.19 11.70 7.50 15.60 Q3.60 12.29 -0.30 15.60 Q3.02 11.70 -0.30 7.80Z"/><path d="M-0.30 16.30 Q3.60 19.61 7.50 16.30 Q4.19 20.20 7.50 24.10 Q3.60 20.79 -0.30 24.10 Q3.02 20.20 -0.30 16.30Z"/><path d="M24.50 7.80 Q28.40 11.11 32.30 7.80 Q28.98 11.70 32.30 15.60 Q28.40 12.29 24.50 15.60 Q27.81 11.70 24.50 7.80Z"/><path d="M24.50 16.30 Q28.40 19.61 32.30 16.30 Q28.98 20.20 32.30 24.10 Q28.40 20.79 24.50 24.10 Q27.81 20.20 24.50 16.30Z"/></g><g stroke="#3e9c64" stroke-width="1.3" opacity=".8"><path d="M4.5 4.5l2 2M27.5 4.5l-2 2M4.5 27.5l2-2M27.5 27.5l-2-2"/></g><g fill="#fff"><circle cx="12.1" cy="11.6" r="1.6"/><circle cx="20.2" cy="11.6" r="1.6"/><circle cx="12.1" cy="20" r="1.6"/><circle cx="20.2" cy="20" r="1.6"/></g></svg>
<svg style="left:1218.5px;top:510.5px;width:26px;height:26px" viewBox="0 0 26 26" ><circle cx="13" cy="13" r="12.2" stroke="#108548" stroke-width="1.6" fill="#fff"/><path d="M8.4 13.3l3.3 3.1 5.9-6" stroke="#108548" stroke-width="2.7" fill="none" stroke-linecap="round" stroke-linejoin="round"/></svg>
<div class="a" style="left:1244.3px;top:522.5px;width:5px;height:2px;background:#bfbfc3"></div>
<svg style="left:1248.8px;top:510.5px;width:26px;height:26px" viewBox="0 0 26 26" ><circle cx="13" cy="13" r="12.2" stroke="#108548" stroke-width="1.6" fill="#fff"/><path d="M8.4 13.3l3.3 3.1 5.9-6" stroke="#108548" stroke-width="2.7" fill="none" stroke-linecap="round" stroke-linejoin="round"/></svg>
<div class="grp" style="left:1665px;top:511.1px;width:96px"></div>
<div class="a" style="left:1726px;top:512.1px;width:1px;height:33px;background:#bfbfc3"></div>
<svg style="left:1683px;top:521.4px;width:9px;height:13px" viewBox="0 0 9 13" ><path d="M.5 .8v11.4L8.7 6.5z" fill="#525252"/></svg>
<svg style="left:1705px;top:525.6px;width:9px;height:6px" viewBox="0 0 9 6" ><path d="M1 1l3.5 3.5L8 1" stroke="#303030" stroke-width="1.4" fill="none"/></svg>
<svg style="left:1740.5px;top:519.6px;width:6px;height:18px" viewBox="0 0 6 18" ><circle cx="3" cy="2.5" r="2" fill="#525252"/><circle cx="3" cy="9" r="2" fill="#525252"/><circle cx="3" cy="15.5" r="2" fill="#525252"/></svg>
<div class="hr" style="top:593.3px"></div>
<div class="badge pass" style="top:606.1px;width:87px"></div>
<svg style="left:432.5px;top:613.9px;width:17px;height:17px" viewBox="0 0 17 17" ><circle cx="8.5" cy="8.5" r="7.6" stroke="#108548" stroke-width="1.7" fill="none"/><path d="M5.3 8.8l2.2 2.2 4.2-4.4" stroke="#108548" stroke-width="1.7" fill="none"/></svg>
<div class="t" style="left:454.8px;top:610.16px;font-size:15.4px;line-height:20px;color:#108548;font-weight:400;font-family:'Liberation Sans',sans-serif;transform:scaleX(0.9186);transform-origin:0 0;">passed</div>
<svg style="left:424px;top:641.9999999999999px;width:12px;height:13px" viewBox="0 0 12 13" ><circle cx="6" cy="7.3" r="4.9" stroke="#666" stroke-width="1.4" fill="none"/><path d="M6 7.5L4.6 5.2M4 .8h4M10 2.5l1-1" stroke="#666" stroke-width="1.4" fill="none"/></svg>
<div class="t" style="left:445.8px;top:639.26px;font-size:15.4px;line-height:20px;color:#666;font-weight:400;font-family:'Liberation Sans',sans-serif;transform:scaleX(0.9179);transform-origin:0 0;">00:04:17</div>
<svg style="left:424px;top:661.3px;width:12px;height:11px" viewBox="0 0 12 11" ><rect x=".7" y="1.7" width="10.6" height="8.6" rx=".8" stroke="#666" stroke-width="1.4" fill="none"/><path d="M.7 4.3h10.6M3.5 0v2.5M8.5 0v2.5" stroke="#666" stroke-width="1.4"/><rect x="7.5" y="6.5" width="1.8" height="1.8" fill="#666"/></svg>
<div class="t" style="left:445.8px;top:656.96px;font-size:15.4px;line-height:20px;color:#666;font-weight:400;font-family:'Liberation Sans',sans-serif;transform:scaleX(0.9881);transform-origin:0 0;">28 minutes ago</div>
<div class="t" style="left:640.8px;top:610.76px;font-size:15.4px;line-height:20px;color:#303030;font-weight:400;font-family:'Liberation Sans',sans-serif;transform:scaleX(0.9714);transform-origin:0 0;">fdasadfsadsfadsfasdf</div>
<div class="t" style="left:640.8px;top:632.26px;font-size:15.4px;line-height:20px;color:#1b6ac0;font-weight:400;font-family:'Liberation Sans',sans-serif;transform:scaleX(0.9695);transform-origin:0 0;">#545869035</div>
<div class="a" style="left:640px;top:649.2px;width:88px;height:1px;background:#1b6ac0"></div>
<svg style="left:739px;top:635.0999999999999px;width:14px;height:15.5px" viewBox="0 0 14 15.5" ><circle cx="3" cy="12.5" r="2.1" stroke="#303030" stroke-width="1.5" fill="none"/><circle cx="3" cy="3" r="2.1" stroke="#303030" stroke-width="1.5" fill="none"/><circle cx="11" cy="3" r="2.1" stroke="#303030" stroke-width="1.5" fill="none"/><path d="M3 5.1v5.3M11 5.1c0 4-7.5 2.5-7.8 5.6" stroke="#303030" stroke-width="1.5" fill="none"/></svg>
<div class="t" style="left:761.7px;top:633.79px;font-size:14.3px;line-height:20px;color:#303030;font-weight:400;font-family:'Liberation Mono',monospace;transform:scaleX(0.9904);transform-origin:0 0;">main</div>
<svg style="left:809px;top:637.0999999999999px;width:18px;height:12px" viewBox="0 0 18 12" ><circle cx="9" cy="6" r="3.6" stroke="#303030" stroke-width="1.7" fill="none"/><path d="M0 6h5.4M12.6 6H18" stroke="#303030" stroke-width="1.7"/></svg>
<div class="t" style="left:834.4px;top:633.79px;font-size:14.3px;line-height:20px;color:#1b6ac0;font-weight:400;font-family:'Liberation Mono',monospace;transform:scaleX(1.0111);transform-origin:0 0;">dcc5148c</div>
<svg style="left:911px;top:635.0999999999999px;width:17px;height:17px" viewBox="0 0 32 32" ><circle cx="16" cy="16" r="16" fill="#d5ecdc"/><g fill="#3e9c64" opacity="0.85"><rect x="7.6" y="7.2" width="16.8" height="17"/><path d="M8.20 -0.50 Q12.10 2.81 16.00 -0.50 Q12.68 3.40 16.00 7.30 Q12.10 3.98 8.20 7.30 Q11.52 3.40 8.20 -0.50Z"/><path d="M16.30 -0.50 Q20.20 2.81 24.10 -0.50 Q20.79 3.40 24.10 7.30 Q20.20 3.98 16.30 7.30 Q19.61 3.40 16.30 -0.50Z"/><path d="M8.20 24.50 Q12.10 27.81 16.00 24.50 Q12.68 28.40 16.00 32.30 Q12.10 28.98 8.20 32.30 Q11.52 28.40 8.20 24.50Z"/><path d="M16.30 24.50 Q20.20 27.81 24.10 24.50 Q20.79 28.40 24.10 32.30 Q20.20 28.98 16.30 32.30 Q19.61 28.40 16.30 24.50Z"/><path d="M-0.30 7.80 Q3.60 11.11 7.50 7.80 Q4.19 11.70 7.50 15.60 Q3.60 12.29 -0.30 15.60 Q3.02 11.70 -0.30 7.80Z"/><path d="M-0.30 16.30 Q3.60 19.61 7.50 16.30 Q4.19 20.20 7.50 24.10 Q3.60 20.79 -0.30 24.10 Q3.02 20.20 -0.30 16.30Z"/><path d="M24.50 7.80 Q28.40 11.11 32.30 7.80 Q28.98 11.70 32.30 15.60 Q28.40 12.29 24.50 15.60 Q27.81 11.70 24.50 7.80Z"/><path d="M24.50 16.30 Q28.40 19.61 32.30 16.30 Q28.98 20.20 32.30 24.10 Q28.40 20.79 24.50 24.10 Q27.81 20.20 24.50 16.30Z"/></g><g stroke="#3e9c64" stroke-width="1.3" opacity=".8"><path d="M4.5 4.5l2 2M27.5 4.5l-2 2M4.5 27.5l2-2M27.5 27.5l-2-2"/></g><g fill="#fff"><circle cx="12.1" cy="11.6" r="1.6"/><circle cx="20.2" cy="11.6" r="1.6"/><circle cx="12.1" cy="20" r="1.6"/><circle cx="20.2" cy="20" r="1.6"/></g></svg>
<svg style="left:1084px;top:612.5px;width:33px;height:33px" viewBox="0 0 32 32" ><circle cx="16" cy="16" r="16" fill="#fff"/><g fill="#3e9c64" opacity="1"><rect x="7.6" y="7.2" width="16.8" height="17"/><path d="M8.20 -0.50 Q12.10 2.81 16.00 -0.50 Q12.68 3.40 16.00 7.30 Q12.10 3.98 8.20 7.30 Q11.52 3.40 8.20 -0.50Z"/><path d="M16.30 -0.50 Q20.20 2.81 24.10 -0.50 Q20.79 3.40 24.10 7.30 Q20.20 3.98 16.30 7.30 Q19.61 3.40 16.30 -0.50Z"/><path d="M8.20 24.50 Q12.10 27.81 16.00 24.50 Q12.68 28.40 16.00 32.30 Q12.10 28.98 8.20 32.30 Q11.52 28.40 8.20 24.50Z"/><path d="M16.30 24.50 Q20.20 27.81 24.10 24.50 Q20.79 28.40 24.10 32.30 Q20.20 28.98 16.30 32.30 Q19.61 28.40 16.30 24.50Z"/><path d="M-0.30 7.80 Q3.60 11.11 7.50 7.80 Q4.19 11.70 7.50 15.60 Q3.60 12.29 -0.30 15.60 Q3.02 11.70 -0.30 7.80Z"/><path d="M-0.30 16.30 Q3.60 19.61 7.50 16.30 Q4.19 20.20 7.50 24.10 Q3.60 20.79 -0.30 24.10 Q3.02 20.20 -0.30 16.30Z"/><path d="M24.50 7.80 Q28.40 11.11 32.30 7.80 Q28.98 11.70 32.30 15.60 Q28.40 12.29 24.50 15.60 Q27.81 11.70 24.50 7.80Z"/><path d="M24.50 16.30 Q28.40 19.61 32.30 16.30 Q28.98 20.20 32.30 24.10 Q28.40 20.79 24.50 24.10 Q27.81 20.20 24.50 16.30Z"/></g><g stroke="#3e9c64" stroke-width="1.3" opacity=".8"><path d="M4.5 4.5l2 2M27.5 4.5l-2 2M4.5 27.5l2-2M27.5 27.5l-2-2"/></g><g fill="#fff"><circle cx="12.1" cy="11.6" r="1.6"/><circle cx="20.2" cy="11.6" r="1.6"/><circle cx="12.1" cy="20" r="1.6"/><circle cx="20.2" cy="20" r="1.6"/></g></svg>
<svg style="left:1218.5px;top:611.5px;width:26px;height:26px" viewBox="0 0 26 26" ><circle cx="13" cy="13" r="12.2" stroke="#108548" stroke-width="1.6" fill="#fff"/><path d="M8.4 13.3l3.3 3.1 5.9-6" stroke="#108548" stroke-width="2.7" fill="none" stroke-linecap="round" stroke-linejoin="round"/></svg>
<div class="a" style="left:1244.3px;top:623.5px;width:5px;height:2px;background:#bfbfc3"></div>
<svg style="left:1248.8px;top:611.5px;width:26px;height:26px" viewBox="0 0 26 26" ><circle cx="13" cy="13" r="12.2" stroke="#108548" stroke-width="1.6" fill="#fff"/><path d="M8.4 13.3l3.3 3.1 5.9-6" stroke="#108548" stroke-width="2.7" fill="none" stroke-linecap="round" stroke-linejoin="round"/></svg>
<div class="grp" style="left:1726px;top:612.1px;width:35px"></div>
<svg style="left:1740.5px;top:620.5999999999999px;width:6px;height:18px" viewBox="0 0 6 18" ><circle cx="3" cy="2.5" r="2" fill="#525252"/><circle cx="3" cy="9" r="2" fill="#525252"/><circle cx="3" cy="15.5" r="2" fill="#525252"/></svg>
<div class="hr" style="top:693.7px"></div>
<div class="badge fail" style="top:706.5px;width:77px"></div>
<svg style="left:432.5px;top:714.3000000000001px;width:17px;height:17px" viewBox="0 0 17 17" ><circle cx="8.5" cy="8.5" r="7.6" stroke="#dd2b0e" stroke-width="1.7" fill="none"/><path d="M6.3 6.3l4.4 4.4M10.7 6.3l-4.4 4.4" stroke="#dd2b0e" stroke-width="1.9"/></svg>
<div class="t" style="left:454.8px;top:710.56px;font-size:15.4px;line-height:20px;color:#dd2b0e;font-weight:400;font-family:'Liberation Sans',sans-serif;transform:scaleX(0.9783);transform-origin:0 0;">failed</div>
<svg style="left:424px;top:744.0px;width:12px;height:11px" viewBox="0 0 12 11" ><rect x=".7" y="1.7" width="10.6" height="8.6" rx=".8" stroke="#666" stroke-width="1.4" fill="none"/><path d="M.7 4.3h10.6M3.5 0v2.5M8.5 0v2.5" stroke="#666" stroke-width="1.4"/><rect x="7.5" y="6.5" width="1.8" height="1.8" fill="#666"/></svg>
<div class="t" style="left:445.8px;top:739.66px;font-size:15.4px;line-height:20px;color:#666;font-weight:400;font-family:'Liberation Sans',sans-serif;transform:scaleX(0.9976);transform-origin:0 0;">35 minutes ago</div>
<div class="t" style="left:640.8px;top:711.16px;font-size:15.4px;line-height:20px;color:#303030;font-weight:400;font-family:'Liberation Sans',sans-serif;transform:scaleX(0.9544);transform-origin:0 0;">fdassasdfadfsafds</div>
<div class="t" style="left:640.8px;top:732.66px;font-size:15.4px;line-height:20px;color:#1b6ac0;font-weight:400;font-family:'Liberation Sans',sans-serif;transform:scaleX(0.9695);transform-origin:0 0;">#545866101</div>
<div class="a" style="left:640px;top:749.6px;width:88px;height:1px;background:#1b6ac0"></div>
<svg style="left:739px;top:735.5px;width:14px;height:15.5px" viewBox="0 0 14 15.5" ><circle cx="3" cy="12.5" r="2.1" stroke="#303030" stroke-width="1.5" fill="none"/><circle cx="3" cy="3" r="2.1" stroke="#303030" stroke-width="1.5" fill="none"/><circle cx="11" cy="3" r="2.1" stroke="#303030" stroke-width="1.5" fill="none"/><path d="M3 5.1v5.3M11 5.1c0 4-7.5 2.5-7.8 5.6" stroke="#303030" stroke-width="1.5" fill="none"/></svg>
<div class="t" style="left:761.7px;top:734.19px;font-size:14.3px;line-height:20px;color:#303030;font-weight:400;font-family:'Liberation Mono',monospace;transform:scaleX(0.9904);transform-origin:0 0;">main</div>
<svg style="left:809px;top:737.5px;width:18px;height:12px" viewBox="0 0 18 12" ><circle cx="9" cy="6" r="3.6" stroke="#303030" stroke-width="1.7" fill="none"/><path d="M0 6h5.4M12.6 6H18" stroke="#303030" stroke-width="1.7"/></svg>
<div class="t" style="left:834.4px;top:734.19px;font-size:14.3px;line-height:20px;color:#1b6ac0;font-weight:400;font-family:'Liberation Mono',monospace;transform:scaleX(1.0111);transform-origin:0 0;">d905cc24</div>
<svg style="left:911px;top:735.5px;width:17px;height:17px" viewBox="0 0 32 32" ><circle cx="16" cy="16" r="16" fill="#d5ecdc"/><g fill="#3e9c64" opacity="0.85"><rect x="7.6" y="7.2" width="16.8" height="17"/><path d="M8.20 -0.50 Q12.10 2.81 16.00 -0.50 Q12.68 3.40 16.00 7.30 Q12.10 3.98 8.20 7.30 Q11.52 3.40 8.20 -0.50Z"/><path d="M16.30 -0.50 Q20.20 2.81 24.10 -0.50 Q20.79 3.40 24.10 7.30 Q20.20 3.98 16.30 7.30 Q19.61 3.40 16.30 -0.50Z"/><path d="M8.20 24.50 Q12.10 27.81 16.00 24.50 Q12.68 28.40 16.00 32.30 Q12.10 28.98 8.20 32.30 Q11.52 28.40 8.20 24.50Z"/><path d="M16.30 24.50 Q20.20 27.81 24.10 24.50 Q20.79 28.40 24.10 32.30 Q20.20 28.98 16.30 32.30 Q19.61 28.40 16.30 24.50Z"/><path d="M-0.30 7.80 Q3.60 11.11 7.50 7.80 Q4.19 11.70 7.50 15.60 Q3.60 12.29 -0.30 15.60 Q3.02 11.70 -0.30 7.80Z"/><path d="M-0.30 16.30 Q3.60 19.61 7.50 16.30 Q4.19 20.20 7.50 24.10 Q3.60 20.79 -0.30 24.10 Q3.02 20.20 -0.30 16.30Z"/><path d="M24.50 7.80 Q28.40 11.11 32.30 7.80 Q28.98 11.70 32.30 15.60 Q28.40 12.29 24.50 15.60 Q27.81 11.70 24.50 7.80Z"/><path d="M24.50 16.30 Q28.40 19.61 32.30 16.30 Q28.98 20.20 32.30 24.10 Q28.40 20.79 24.50 24.10 Q27.81 20.20 24.50 16.30Z"/></g><g stroke="#3e9c64" stroke-width="1.3" opacity=".8"><path d="M4.5 4.5l2 2M27.5 4.5l-2 2M4.5 27.5l2-2M27.5 27.5l-2-2"/></g><g fill="#fff"><circle cx="12.1" cy="11.6" r="1.6"/><circle cx="20.2" cy="11.6" r="1.6"/><circle cx="12.1" cy="20" r="1.6"/><circle cx="20.2" cy="20" r="1.6"/></g></svg>
<div class="a red" style="left:640px;top:759.3px;width:86px;height:17px;border-radius:9px"></div>
<div class="t" style="left:648.85px;top:758.03px;font-size:13.2px;line-height:20px;color:#a02e1c;font-weight:400;font-family:'Liberation Sans',sans-serif;transform:scaleX(0.9912);transform-origin:0 0;">yaml invalid</div>
<div class="a red" style="left:731px;top:759.3px;width:45.4px;height:17px;border-radius:9px"></div>
<div class="t" style="left:740.2px;top:758.03px;font-size:13.2px;line-height:20px;color:#a02e1c;font-weight:400;font-family:'Liberation Sans',sans-serif;transform:scaleX(0.9697);transform-origin:0 0;">error</div>
<svg style="left:1084px;top:712.9000000000001px;width:33px;height:33px" viewBox="0 0 32 32" ><circle cx="16" cy="16" r="16" fill="#fff"/><g fill="#3e9c64" opacity="1"><rect x="7.6" y="7.2" width="16.8" height="17"/><path d="M8.20 -0.50 Q12.10 2.81 16.00 -0.50 Q12.68 3.40 16.00 7.30 Q12.10 3.98 8.20 7.30 Q11.52 3.40 8.20 -0.50Z"/><path d="M16.30 -0.50 Q20.20 2.81 24.10 -0.50 Q20.79 3.40 24.10 7.30 Q20.20 3.98 16.30 7.30 Q19.61 3.40 16.30 -0.50Z"/><path d="M8.20 24.50 Q12.10 27.81 16.00 24.50 Q12.68 28.40 16.00 32.30 Q12.10 28.98 8.20 32.30 Q11.52 28.40 8.20 24.50Z"/><path d="M16.30 24.50 Q20.20 27.81 24.10 24.50 Q20.79 28.40 24.10 32.30 Q20.20 28.98 16.30 32.30 Q19.61 28.40 16.30 24.50Z"/><path d="M-0.30 7.80 Q3.60 11.11 7.50 7.80 Q4.19 11.70 7.50 15.60 Q3.60 12.29 -0.30 15.60 Q3.02 11.70 -0.30 7.80Z"/><path d="M-0.30 16.30 Q3.60 19.61 7.50 16.30 Q4.19 20.20 7.50 24.10 Q3.60 20.79 -0.30 24.10 Q3.02 20.20 -0.30 16.30Z"/><path d="M24.50 7.80 Q28.40 11.11 32.30 7.80 Q28.98 11.70 32.30 15.60 Q28.40 12.29 24.50 15.60 Q27.81 11.70 24.50 7.80Z"/><path d="M24.50 16.30 Q28.40 19.61 32.30 16.30 Q28.98 20.20 32.30 24.10 Q28.40 20.79 24.50 24.10 Q27.81 20.20 24.50 16.30Z"/></g><g stroke="#3e9c64" stroke-width="1.3" opacity=".8"><path d="M4.5 4.5l2 2M27.5 4.5l-2 2M4.5 27.5l2-2M27.5 27.5l-2-2"/></g><g fill="#fff"><circle cx="12.1" cy="11.6" r="1.6"/><circle cx="20.2" cy="11.6" r="1.6"/><circle cx="12.1" cy="20" r="1.6"/><circle cx="20.2" cy="20" r="1.6"/></g></svg>
<div class="grp" style="left:1726px;top:712.5px;width:35px"></div>
<svg style="left:1740.5px;top:721.0px;width:6px;height:18px" viewBox="0 0 6 18" ><circle cx="3" cy="2.5" r="2" fill="#525252"/><circle cx="3" cy="9" r="2" fill="#525252"/><circle cx="3" cy="15.5" r="2" fill="#525252"/></svg>
<div class="hr" style="top:797.7px"></div>
<div class="badge fail" style="top:810.5px;width:77px"></div>
<svg style="left:432.5px;top:818.3000000000001px;width:17px;height:17px" viewBox="0 0 17 17" ><circle cx="8.5" cy="8.5" r="7.6" stroke="#dd2b0e" stroke-width="1.7" fill="none"/><path d="M6.3 6.3l4.4 4.4M10.7 6.3l-4.4 4.4" stroke="#dd2b0e" stroke-width="1.9"/></svg>
<div class="t" style="left:454.8px;top:814.56px;font-size:15.4px;line-height:20px;color:#dd2b0e;font-weight:400;font-family:'Liberation Sans',sans-serif;transform:scaleX(0.9783);transform-origin:0 0;">failed</div>
<svg style="left:424px;top:848.0px;width:12px;height:11px" viewBox="0 0 12 11" ><rect x=".7" y="1.7" width="10.6" height="8.6" rx=".8" stroke="#666" stroke-width="1.4" fill="none"/><path d="M.7 4.3h10.6M3.5 0v2.5M8.5 0v2.5" stroke="#666" stroke-width="1.4"/><rect x="7.5" y="6.5" width="1.8" height="1.8" fill="#666"/></svg>
<div class="t" style="left:445.8px;top:843.66px;font-size:15.4px;line-height:20px;color:#666;font-weight:400;font-family:'Liberation Sans',sans-serif;transform:scaleX(0.9976);transform-origin:0 0;">36 minutes ago</div>
<div class="t" style="left:640.8px;top:815.16px;font-size:15.4px;line-height:20px;color:#303030;font-weight:400;font-family:'Liberation Sans',sans-serif;transform:scaleX(1.0090);transform-origin:0 0;">update</div>
<div class="t" style="left:640.8px;top:836.66px;font-size:15.4px;line-height:20px;color:#1b6ac0;font-weight:400;font-family:'Liberation Sans',sans-serif;transform:scaleX(0.9828);transform-origin:0 0;">#545864114</div>
<div class="a" style="left:640px;top:853.6px;width:88px;height:1px;background:#1b6ac0"></div>
<svg style="left:739px;top:839.5px;width:14px;height:15.5px" viewBox="0 0 14 15.5" ><circle cx="3" cy="12.5" r="2.1" stroke="#303030" stroke-width="1.5" fill="none"/><circle cx="3" cy="3" r="2.1" stroke="#303030" stroke-width="1.5" fill="none"/><circle cx="11" cy="3" r="2.1" stroke="#303030" stroke-width="1.5" fill="none"/><path d="M3 5.1v5.3M11 5.1c0 4-7.5 2.5-7.8 5.6" stroke="#303030" stroke-width="1.5" fill="none"/></svg>
<div class="t" style="left:761.7px;top:838.19px;font-size:14.3px;line-height:20px;color:#303030;font-weight:400;font-family:'Liberation Mono',monospace;transform:scaleX(0.9904);transform-origin:0 0;">main</div>
<svg style="left:809px;top:841.5px;width:18px;height:12px" viewBox="0 0 18 12" ><circle cx="9" cy="6" r="3.6" stroke="#303030" stroke-width="1.7" fill="none"/><path d="M0 6h5.4M12.6 6H18" stroke="#303030" stroke-width="1.7"/></svg>
<div class="t" style="left:834.4px;top:838.19px;font-size:14.3px;line-height:20px;color:#1b6ac0;font-weight:400;font-family:'Liberation Mono',monospace;transform:scaleX(1.0111);transform-origin:0 0;">6f781059</div>
<svg style="left:911px;top:839.5px;width:17px;height:17px" viewBox="0 0 32 32" ><circle cx="16" cy="16" r="16" fill="#d5ecdc"/><g fill="#3e9c64" opacity="0.85"><rect x="7.6" y="7.2" width="16.8" height="17"/><path d="M8.20 -0.50 Q12.10 2.81 16.00 -0.50 Q12.68 3.40 16.00 7.30 Q12.10 3.98 8.20 7.30 Q11.52 3.40 8.20 -0.50Z"/><path d="M16.30 -0.50 Q20.20 2.81 24.10 -0.50 Q20.79 3.40 24.10 7.30 Q20.20 3.98 16.30 7.30 Q19.61 3.40 16.30 -0.50Z"/><path d="M8.20 24.50 Q12.10 27.81 16.00 24.50 Q12.68 28.40 16.00 32.30 Q12.10 28.98 8.20 32.30 Q11.52 28.40 8.20 24.50Z"/><path d="M16.30 24.50 Q20.20 27.81 24.10 24.50 Q20.79 28.40 24.10 32.30 Q20.20 28.98 16.30 32.30 Q19.61 28.40 16.30 24.50Z"/><path d="M-0.30 7.80 Q3.60 11.11 7.50 7.80 Q4.19 11.70 7.50 15.60 Q3.60 12.29 -0.30 15.60 Q3.02 11.70 -0.30 7.80Z"/><path d="M-0.30 16.30 Q3.60 19.61 7.50 16.30 Q4.19 20.20 7.50 24.10 Q3.60 20.79 -0.30 24.10 Q3.02 20.20 -0.30 16.30Z"/><path d="M24.50 7.80 Q28.40 11.11 32.30 7.80 Q28.98 11.70 32.30 15.60 Q28.40 12.29 24.50 15.60 Q27.81 11.70 24.50 7.80Z"/><path d="M24.50 16.30 Q28.40 19.61 32.30 16.30 Q28.98 20.20 32.30 24.10 Q28.40 20.79 24.50 24.10 Q27.81 20.20 24.50 16.30Z"/></g><g stroke="#3e9c64" stroke-width="1.3" opacity=".8"><path d="M4.5 4.5l2 2M27.5 4.5l-2 2M4.5 27.5l2-2M27.5 27.5l-2-2"/></g><g fill="#fff"><circle cx="12.1" cy="11.6" r="1.6"/><circle cx="20.2" cy="11.6" r="1.6"/><circle cx="12.1" cy="20" r="1.6"/><circle cx="20.2" cy="20" r="1.6"/></g></svg>
<div class="a red" style="left:640px;top:863.3px;width:86px;height:17px;border-radius:9px"></div>
<div class="t" style="left:648.85px;top:862.03px;font-size:13.2px;line-height:20px;color:#a02e1c;font-weight:400;font-family:'Liberation Sans',sans-serif;transform:scaleX(0.9912);transform-origin:0 0;">yaml invalid</div>
<div class="a red" style="left:731px;top:863.3px;width:45.4px;height:17px;border-radius:9px"></div>
<div class="t" style="left:740.2px;top:862.03px;font-size:13.2px;line-height:20px;color:#a02e1c;font-weight:400;font-family:'Liberation Sans',sans-serif;transform:scaleX(0.9697);transform-origin:0 0;">error</div>
<svg style="left:1084px;top:816.9000000000001px;width:33px;height:33px" viewBox="0 0 32 32" ><circle cx="16" cy="16" r="16" fill="#fff"/><g fill="#3e9c64" opacity="1"><rect x="7.6" y="7.2" width="16.8" height="17"/><path d="M8.20 -0.50 Q12.10 2.81 16.00 -0.50 Q12.68 3.40 16.00 7.30 Q12.10 3.98 8.20 7.30 Q11.52 3.40 8.20 -0.50Z"/><path d="M16.30 -0.50 Q20.20 2.81 24.10 -0.50 Q20.79 3.40 24.10 7.30 Q20.20 3.98 16.30 7.30 Q19.61 3.40 16.30 -0.50Z"/><path d="M8.20 24.50 Q12.10 27.81 16.00 24.50 Q12.68 28.40 16.00 32.30 Q12.10 28.98 8.20 32.30 Q11.52 28.40 8.20 24.50Z"/><path d="M16.30 24.50 Q20.20 27.81 24.10 24.50 Q20.79 28.40 24.10 32.30 Q20.20 28.98 16.30 32.30 Q19.61 28.40 16.30 24.50Z"/><path d="M-0.30 7.80 Q3.60 11.11 7.50 7.80 Q4.19 11.70 7.50 15.60 Q3.60 12.29 -0.30 15.60 Q3.02 11.70 -0.30 7.80Z"/><path d="M-0.30 16.30 Q3.60 19.61 7.50 16.30 Q4.19 20.20 7.50 24.10 Q3.60 20.79 -0.30 24.10 Q3.02 20.20 -0.30 16.30Z"/><path d="M24.50 7.80 Q28.40 11.11 32.30 7.80 Q28.98 11.70 32.30 15.60 Q28.40 12.29 24.50 15.60 Q27.81 11.70 24.50 7.80Z"/><path d="M24.50 16.30 Q28.40 19.61 32.30 16.30 Q28.98 20.20 32.30 24.10 Q28.40 20.79 24.50 24.10 Q27.81 20.20 24.50 16.30Z"/></g><g stroke="#3e9c64" stroke-width="1.3" opacity=".8"><path d="M4.5 4.5l2 2M27.5 4.5l-2 2M4.5 27.5l2-2M27.5 27.5l-2-2"/></g><g fill="#fff"><circle cx="12.1" cy="11.6" r="1.6"/><circle cx="20.2" cy="11.6" r="1.6"/><circle cx="12.1" cy="20" r="1.6"/><circle cx="20.2" cy="20" r="1.6"/></g></svg>
<div class="grp" style="left:1726px;top:816.5px;width:35px"></div>
<svg style="left:1740.5px;top:825.0px;width:6px;height:18px" viewBox="0 0 6 18" ><circle cx="3" cy="2.5" r="2" fill="#525252"/><circle cx="3" cy="9" r="2" fill="#525252"/><circle cx="3" cy="15.5" r="2" fill="#525252"/></svg>
<div class="hr" style="top:902.4px"></div>
<div class="badge pass" style="top:915.2px;width:87px"></div>
<svg style="left:432.5px;top:923.0px;width:17px;height:17px" viewBox="0 0 17 17" ><circle cx="8.5" cy="8.5" r="7.6" stroke="#108548" stroke-width="1.7" fill="none"/><path d="M5.3 8.8l2.2 2.2 4.2-4.4" stroke="#108548" stroke-width="1.7" fill="none"/></svg>
<div class="t" style="left:454.8px;top:919.26px;font-size:15.4px;line-height:20px;color:#108548;font-weight:400;font-family:'Liberation Sans',sans-serif;transform:scaleX(0.9186);transform-origin:0 0;">passed</div>
<svg style="left:424px;top:951.0999999999999px;width:12px;height:13px" viewBox="0 0 12 13" ><circle cx="6" cy="7.3" r="4.9" stroke="#666" stroke-width="1.4" fill="none"/><path d="M6 7.5L4.6 5.2M4 .8h4M10 2.5l1-1" stroke="#666" stroke-width="1.4" fill="none"/></svg>
<div class="t" style="left:445.8px;top:948.36px;font-size:15.4px;line-height:20px;color:#666;font-weight:400;font-family:'Liberation Sans',sans-serif;transform:scaleX(0.9179);transform-origin:0 0;">00:03:20</div>
<svg style="left:424px;top:970.4px;width:12px;height:11px" viewBox="0 0 12 11" ><rect x=".7" y="1.7" width="10.6" height="8.6" rx=".8" stroke="#666" stroke-width="1.4" fill="none"/><path d="M.7 4.3h10.6M3.5 0v2.5M8.5 0v2.5" stroke="#666" stroke-width="1.4"/><rect x="7.5" y="6.5" width="1.8" height="1.8" fill="#666"/></svg>
<div class="t" style="left:445.8px;top:966.06px;font-size:15.4px;line-height:20px;color:#666;font-weight:400;font-family:'Liberation Sans',sans-serif;transform:scaleX(0.9976);transform-origin:0 0;">47 minutes ago</div>
<div class="t" style="left:640.8px;top:919.86px;font-size:15.4px;line-height:20px;color:#303030;font-weight:400;font-family:'Liberation Sans',sans-serif;transform:scaleX(0.9096);transform-origin:0 0;">zz</div>
<div class="t" style="left:640.8px;top:941.36px;font-size:15.4px;line-height:20px;color:#1b6ac0;font-weight:400;font-family:'Liberation Sans',sans-serif;transform:scaleX(0.9695);transform-origin:0 0;">#545845382</div>
<div class="a" style="left:640px;top:958.3px;width:88px;height:1px;background:#1b6ac0"></div>
<svg style="left:739px;top:944.1999999999999px;width:14px;height:15.5px" viewBox="0 0 14 15.5" ><circle cx="3" cy="12.5" r="2.1" stroke="#303030" stroke-width="1.5" fill="none"/><circle cx="3" cy="3" r="2.1" stroke="#303030" stroke-width="1.5" fill="none"/><circle cx="11" cy="3" r="2.1" stroke="#303030" stroke-width="1.5" fill="none"/><path d="M3 5.1v5.3M11 5.1c0 4-7.5 2.5-7.8 5.6" stroke="#303030" stroke-width="1.5" fill="none"/></svg>
<div class="t" style="left:761.7px;top:942.89px;font-size:14.3px;line-height:20px;color:#303030;font-weight:400;font-family:'Liberation Mono',monospace;transform:scaleX(0.9904);transform-origin:0 0;">main</div>
<svg style="left:809px;top:946.1999999999999px;width:18px;height:12px" viewBox="0 0 18 12" ><circle cx="9" cy="6" r="3.6" stroke="#303030" stroke-width="1.7" fill="none"/><path d="M0 6h5.4M12.6 6H18" stroke="#303030" stroke-width="1.7"/></svg>
<div class="t" style="left:834.4px;top:942.89px;font-size:14.3px;line-height:20px;color:#1b6ac0;font-weight:400;font-family:'Liberation Mono',monospace;transform:scaleX(1.0111);transform-origin:0 0;">89a2f3c5</div>
<svg style="left:911px;top:944.1999999999999px;width:17px;height:17px" viewBox="0 0 32 32" ><circle cx="16" cy="16" r="16" fill="#d5ecdc"/><g fill="#3e9c64" opacity="0.85"><rect x="7.6" y="7.2" width="16.8" height="17"/><path d="M8.20 -0.50 Q12.10 2.81 16.00 -0.50 Q12.68 3.40 16.00 7.30 Q12.10 3.98 8.20 7.30 Q11.52 3.40 8.20 -0.50Z"/><path d="M16.30 -0.50 Q20.20 2.81 24.10 -0.50 Q20.79 3.40 24.10 7.30 Q20.20 3.98 16.30 7.30 Q19.61 3.40 16.30 -0.50Z"/><path d="M8.20 24.50 Q12.10 27.81 16.00 24.50 Q12.68 28.40 16.00 32.30 Q12.10 28.98 8.20 32.30 Q11.52 28.40 8.20 24.50Z"/><path d="M16.30 24.50 Q20.20 27.81 24.10 24.50 Q20.79 28.40 24.10 32.30 Q20.20 28.98 16.30 32.30 Q19.61 28.40 16.30 24.50Z"/><path d="M-0.30 7.80 Q3.60 11.11 7.50 7.80 Q4.19 11.70 7.50 15.60 Q3.60 12.29 -0.30 15.60 Q3.02 11.70 -0.30 7.80Z"/><path d="M-0.30 16.30 Q3.60 19.61 7.50 16.30 Q4.19 20.20 7.50 24.10 Q3.60 20.79 -0.30 24.10 Q3.02 20.20 -0.30 16.30Z"/><path d="M24.50 7.80 Q28.40 11.11 32.30 7.80 Q28.98 11.70 32.30 15.60 Q28.40 12.29 24.50 15.60 Q27.81 11.70 24.50 7.80Z"/><path d="M24.50 16.30 Q28.40 19.61 32.30 16.30 Q28.98 20.20 32.30 24.10 Q28.40 20.79 24.50 24.10 Q27.81 20.20 24.50 16.30Z"/></g><g stroke="#3e9c64" stroke-width="1.3" opacity=".8"><path d="M4.5 4.5l2 2M27.5 4.5l-2 2M4.5 27.5l2-2M27.5 27.5l-2-2"/></g><g fill="#fff"><circle cx="12.1" cy="11.6" r="1.6"/><circle cx="20.2" cy="11.6" r="1.6"/><circle cx="12.1" cy="20" r="1.6"/><circle cx="20.2" cy="20" r="1.6"/></g></svg>
<svg style="left:1084px;top:921.6px;width:33px;height:33px" viewBox="0 0 32 32" ><circle cx="16" cy="16" r="16" fill="#fff"/><g fill="#3e9c64" opacity="1"><rect x="7.6" y="7.2" width="16.8" height="17"/><path d="M8.20 -0.50 Q12.10 2.81 16.00 -0.50 Q12.68 3.40 16.00 7.30 Q12.10 3.98 8.20 7.30 Q11.52 3.40 8.20 -0.50Z"/><path d="M16.30 -0.50 Q20.20 2.81 24.10 -0.50 Q20.79 3.40 24.10 7.30 Q20.20 3.98 16.30 7.30 Q19.61 3.40 16.30 -0.50Z"/><path d="M8.20 24.50 Q12.10 27.81 16.00 24.50 Q12.68 28.40 16.00 32.30 Q12.10 28.98 8.20 32.30 Q11.52 28.40 8.20 24.50Z"/><path d="M16.30 24.50 Q20.20 27.81 24.10 24.50 Q20.79 28.40 24.10 32.30 Q20.20 28.98 16.30 32.30 Q19.61 28.40 16.30 24.50Z"/><path d="M-0.30 7.80 Q3.60 11.11 7.50 7.80 Q4.19 11.70 7.50 15.60 Q3.60 12.29 -0.30 15.60 Q3.02 11.70 -0.30 7.80Z"/><path d="M-0.30 16.30 Q3.60 19.61 7.50 16.30 Q4.19 20.20 7.50 24.10 Q3.60 20.79 -0.30 24.10 Q3.02 20.20 -0.30 16.30Z"/><path d="M24.50 7.80 Q28.40 11.11 32.30 7.80 Q28.98 11.70 32.30 15.60 Q28.40 12.29 24.50 15.60 Q27.81 11.70 24.50 7.80Z"/><path d="M24.50 16.30 Q28.40 19.61 32.30 16.30 Q28.98 20.20 32.30 24.10 Q28.40 20.79 24.50 24.10 Q27.81 20.20 24.50 16.30Z"/></g><g stroke="#3e9c64" stroke-width="1.3" opacity=".8"><path d="M4.5 4.5l2 2M27.5 4.5l-2 2M4.5 27.5l2-2M27.5 27.5l-2-2"/></g><g fill="#fff"><circle cx="12.1" cy="11.6" r="1.6"/><circle cx="20.2" cy="11.6" r="1.6"/><circle cx="12.1" cy="20" r="1.6"/><circle cx="20.2" cy="20" r="1.6"/></g></svg>
<svg style="left:1218.5px;top:920.6px;width:26px;height:26px" viewBox="0 0 26 26" ><circle cx="13" cy="13" r="12.2" stroke="#108548" stroke-width="1.6" fill="#fff"/><path d="M8.4 13.3l3.3 3.1 5.9-6" stroke="#108548" stroke-width="2.7" fill="none" stroke-linecap="round" stroke-linejoin="round"/></svg>
<div class="grp" style="left:1726px;top:921.2px;width:35px"></div>
<svg style="left:1740.5px;top:929.6999999999999px;width:6px;height:18px" viewBox="0 0 6 18" ><circle cx="3" cy="2.5" r="2" fill="#525252"/><circle cx="3" cy="9" r="2" fill="#525252"/><circle cx="3" cy="15.5" r="2" fill="#525252"/></svg>
<div class="hr" style="top:1002.2px"></div>
<div class="badge fail" style="top:1015.0px;width:77px"></div>
<svg style="left:432.5px;top:1022.8000000000001px;width:17px;height:17px" viewBox="0 0 17 17" ><circle cx="8.5" cy="8.5" r="7.6" stroke="#dd2b0e" stroke-width="1.7" fill="none"/><path d="M6.3 6.3l4.4 4.4M10.7 6.3l-4.4 4.4" stroke="#dd2b0e" stroke-width="1.9"/></svg>
<div class="t" style="left:454.8px;top:1019.06px;font-size:15.4px;line-height:20px;color:#dd2b0e;font-weight:400;font-family:'Liberation Sans',sans-serif;transform:scaleX(0.9783);transform-origin:0 0;">failed</div>
<div class="t" style="left:640.8px;top:1019.66px;font-size:15.4px;line-height:20px;color:#303030;font-weight:400;font-family:'Liberation Sans',sans-serif;transform:scaleX(1.2276);transform-origin:0 0;">tttttttttttttttttttt</div>
<svg style="left:1084px;top:1021.4000000000001px;width:33px;height:33px" viewBox="0 0 32 32" ><circle cx="16" cy="16" r="16" fill="#fff"/><g fill="#3e9c64" opacity="1"><rect x="7.6" y="7.2" width="16.8" height="17"/><path d="M8.20 -0.50 Q12.10 2.81 16.00 -0.50 Q12.68 3.40 16.00 7.30 Q12.10 3.98 8.20 7.30 Q11.52 3.40 8.20 -0.50Z"/><path d="M16.30 -0.50 Q20.20 2.81 24.10 -0.50 Q20.79 3.40 24.10 7.30 Q20.20 3.98 16.30 7.30 Q19.61 3.40 16.30 -0.50Z"/><path d="M8.20 24.50 Q12.10 27.81 16.00 24.50 Q12.68 28.40 16.00 32.30 Q12.10 28.98 8.20 32.30 Q11.52 28.40 8.20 24.50Z"/><path d="M16.30 24.50 Q20.20 27.81 24.10 24.50 Q20.79 28.40 24.10 32.30 Q20.20 28.98 16.30 32.30 Q19.61 28.40 16.30 24.50Z"/><path d="M-0.30 7.80 Q3.60 11.11 7.50 7.80 Q4.19 11.70 7.50 15.60 Q3.60 12.29 -0.30 15.60 Q3.02 11.70 -0.30 7.80Z"/><path d="M-0.30 16.30 Q3.60 19.61 7.50 16.30 Q4.19 20.20 7.50 24.10 Q3.60 20.79 -0.30 24.10 Q3.02 20.20 -0.30 16.30Z"/><path d="M24.50 7.80 Q28.40 11.11 32.30 7.80 Q28.98 11.70 32.30 15.60 Q28.40 12.29 24.50 15.60 Q27.81 11.70 24.50 7.80Z"/><path d="M24.50 16.30 Q28.40 19.61 32.30 16.30 Q28.98 20.20 32.30 24.10 Q28.40 20.79 24.50 24.10 Q27.81 20.20 24.50 16.30Z"/></g><g stroke="#3e9c64" stroke-width="1.3" opacity=".8"><path d="M4.5 4.5l2 2M27.5 4.5l-2 2M4.5 27.5l2-2M27.5 27.5l-2-2"/></g><g fill="#fff"><circle cx="12.1" cy="11.6" r="1.6"/><circle cx="20.2" cy="11.6" r="1.6"/><circle cx="12.1" cy="20" r="1.6"/><circle cx="20.2" cy="20" r="1.6"/></g></svg>
<svg style="left:1218.5px;top:1020.4000000000001px;width:26px;height:26px" viewBox="0 0 26 26" ><circle cx="13" cy="13" r="12.2" stroke="#dd2b0e" stroke-width="1.6" fill="#fff"/><path d="M10 10l6 6M16 10l-6 6" stroke="#dd2b0e" stroke-width="2.3" stroke-linecap="round"/></svg>
<div class="grp" style="left:1692px;top:1021.0px;width:69px"></div>
<div class="a" style="left:1726px;top:1022.0px;width:1px;height:33px;background:#bfbfc3"></div>
<svg style="left:1701px;top:1030.0px;width:16px;height:16px" viewBox="0 0 16 16" ><path d="M13 8a5 5 0 1 1-2-4" stroke="#303030" stroke-width="1.6" fill="none"/><path d="M9 1h4v4" stroke="#303030" stroke-width="1.6" fill="none"/></svg>
<svg style="left:1740.5px;top:1029.5px;width:6px;height:18px" viewBox="0 0 6 18" ><circle cx="3" cy="2.5" r="2" fill="#525252"/><circle cx="3" cy="9" r="2" fill="#525252"/><circle cx="3" cy="15.5" r="2" fill="#525252"/></svg>
<div class="a" style="left:1463px;top:446px;width:263px;height:54px;border:1px solid #dcdcde;border-radius:4px;background:#fff;box-shadow:0 2px 4px rgba(0,0,0,.10)"></div>
<div class="a" style="left:1464px;top:456px;width:259px;height:35px;background:#efefef"></div>
<div class="t" style="left:1481.8px;top:464.16px;font-size:15.4px;line-height:20px;color:#303030;font-weight:400;font-family:'Liberation Sans',sans-serif;transform:scaleX(0.9480);transform-origin:0 0;">deploy</div>
<div id="scroll"></div>
<div class="a" style="left:1905px;top:120px;width:13px;height:433px;background:#c1c1c1"></div>
<svg style="left:1907.5px;top:109px;width:8px;height:5px" viewBox="0 0 8 5" ><path d="M0 5L4 0 8 5z" fill="#a3a3a3"/></svg>
<svg style="left:1907px;top:1019px;width:9px;height:6px" viewBox="0 0 9 6" ><path d="M0 .5L4.5 6 9 .5z" fill="#505050"/></svg>
</body></html>
